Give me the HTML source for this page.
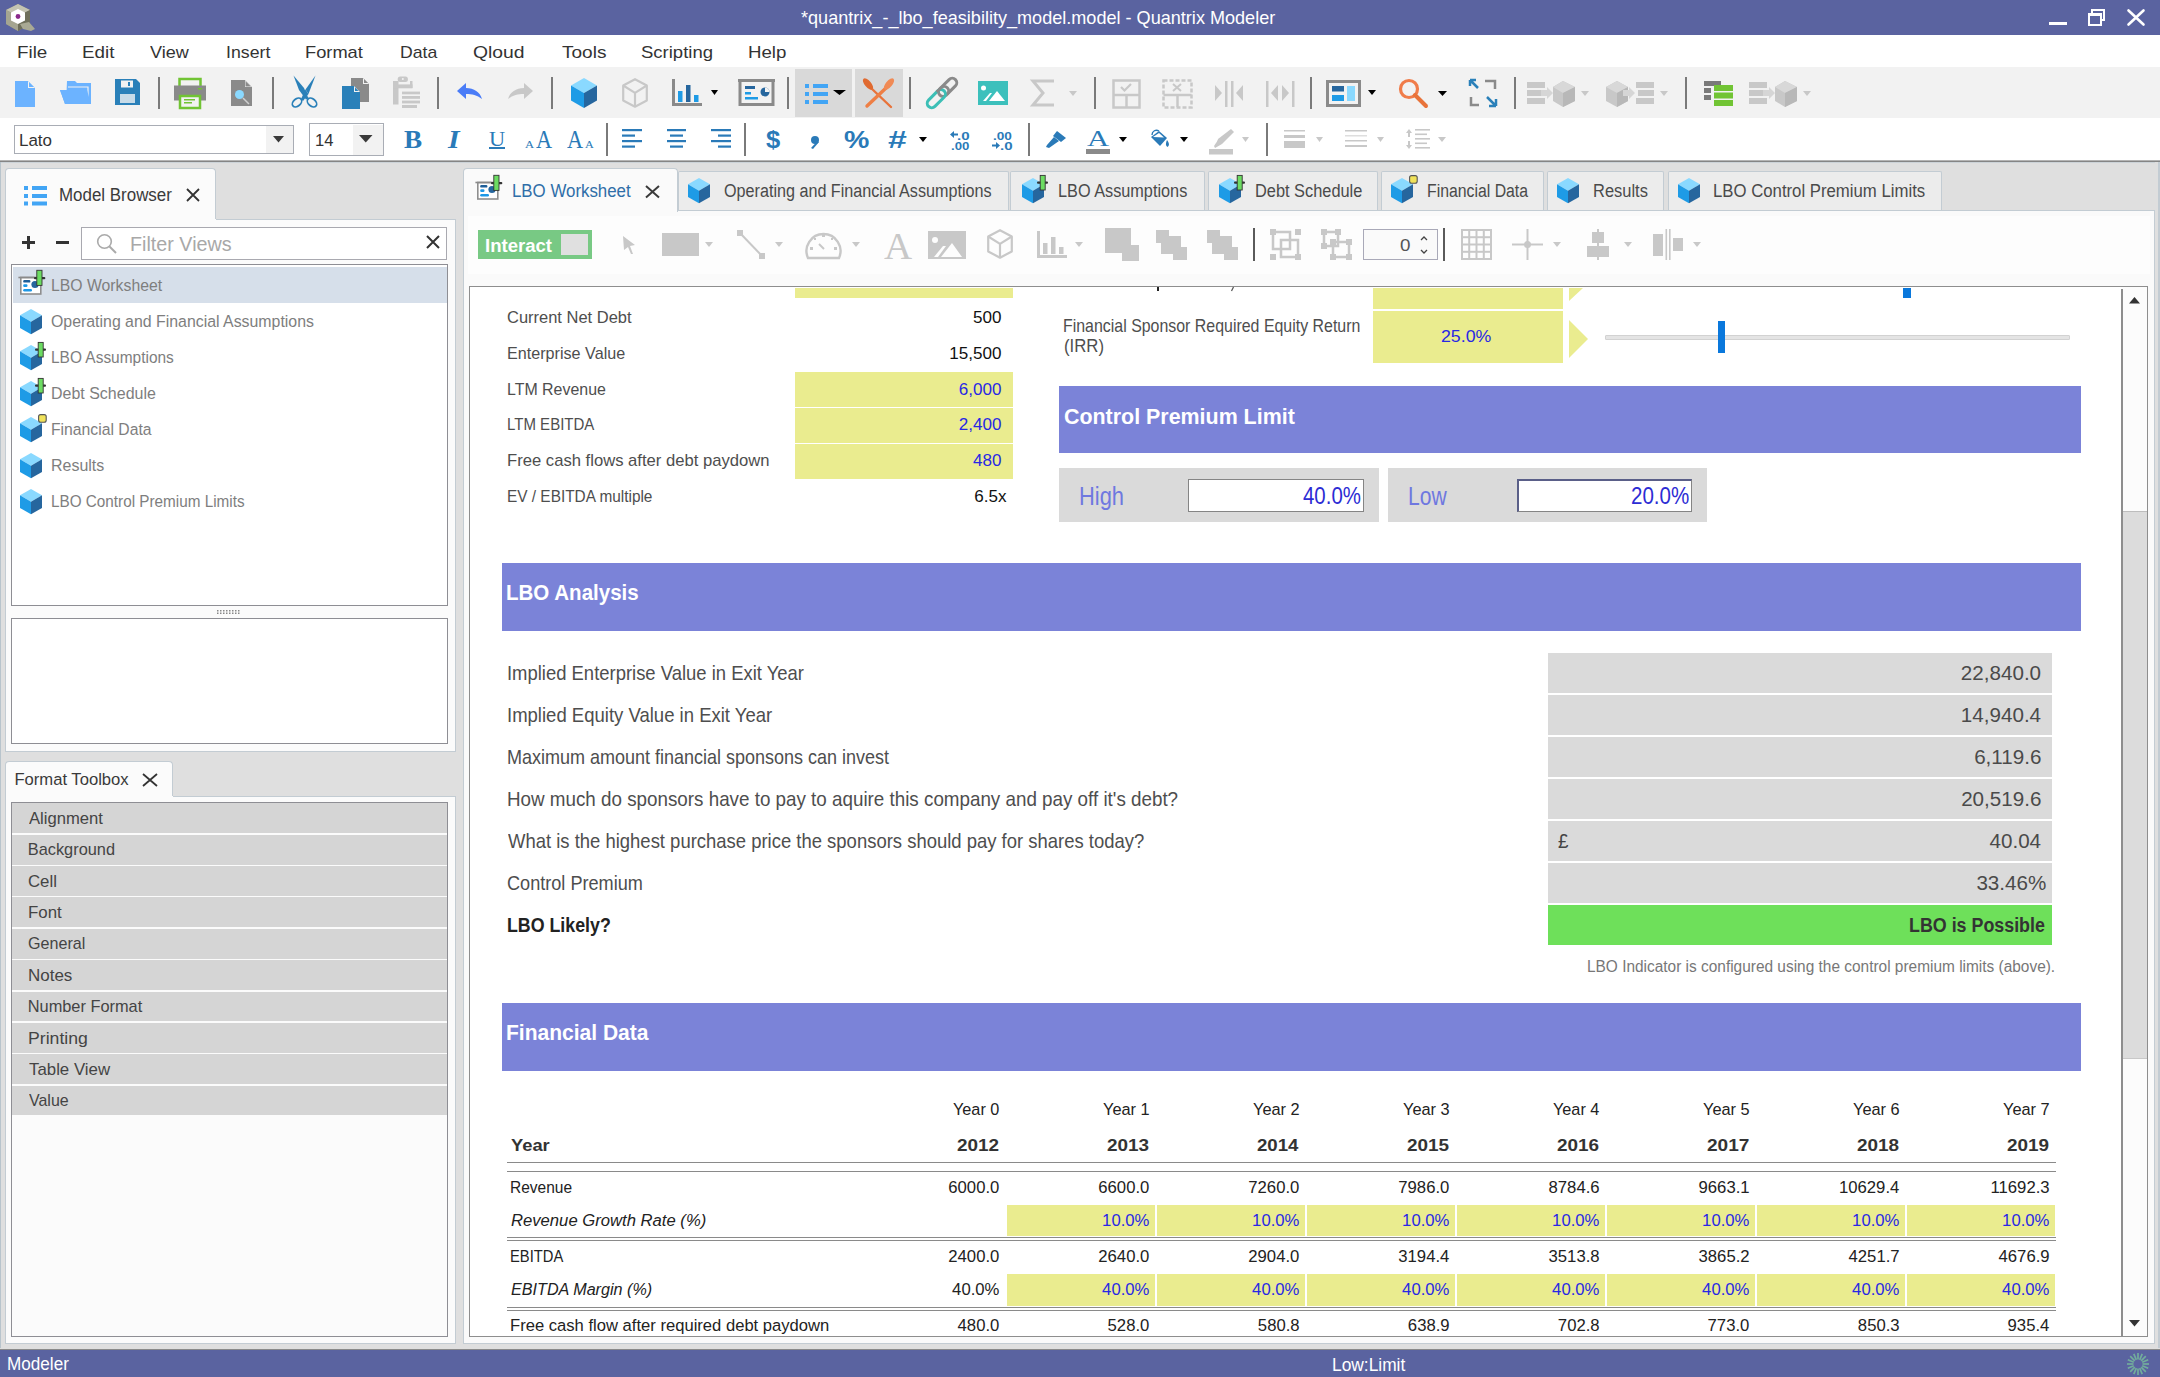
<!DOCTYPE html>
<html><head><meta charset="utf-8"><title>Quantrix Modeler</title>
<style>
html,body{margin:0;padding:0;width:2160px;height:1377px;overflow:hidden;background:#dfdfdf;font-family:"Liberation Sans",sans-serif;}
body{position:relative;}
.t{position:absolute;white-space:nowrap;transform-origin:0 0;}
svg{overflow:visible;}
</style></head><body>
<div style="position:absolute;left:0px;top:0px;width:2160px;height:35px;background:#5a63a0;"></div>
<div class="t" style="left:800.72px;top:9px;font-size:18.77px;line-height:18.77px;color:#ffffff;font-weight:normal;font-style:normal;transform:scaleX(0.9633);">*quantrix_-_lbo_feasibility_model.model - Quantrix Modeler</div>
<div style="position:absolute;left:2049px;top:22px;width:18px;height:3px;background:#ffffff;"></div>
<div style="position:absolute;left:2091px;top:9px;width:14px;height:12px;background:transparent;border:2px solid #fff;box-sizing:border-box;"></div>
<div style="position:absolute;left:2088px;top:13px;width:14px;height:13px;background:#5a63a0;border:2px solid #fff;box-sizing:border-box;border-top-width:3px;"></div>
<svg style="position:absolute;left:2127px;top:9px;" width="18" height="17" viewBox="0 0 18 17"><path d="M1.5 1.5 L16.5 15.5 M16.5 1.5 L1.5 15.5" stroke="#fff" stroke-width="2.6" stroke-linecap="round"/></svg>
<svg style="position:absolute;left:5px;top:3px;" width="32" height="30" viewBox="0 0 32 30"><polygon points="1,7 13,1 25,7 25,21 13,28 1,21" fill="#8d8d77"/><polygon points="1,7 13,1 25,7 13,13" fill="#c4c4b2"/><polygon points="1,7 13,13 13,28 1,21" fill="#a5a591"/><polygon points="13,13 25,7 25,21 13,28" fill="#6f6f5b"/><polygon points="15,21 24,19 30,26 26,28 18,26" fill="#a9a994"/><polygon points="6,9.5 13,6 20,9.5 20,17.5 13,21 6,17.5" fill="#ffffff"/><circle cx="13" cy="13.5" r="2.4" fill="#8a2a8c"/></svg>
<div style="position:absolute;left:0px;top:35px;width:2160px;height:32px;background:#ffffff;"></div>
<div class="t" style="left:17.23px;top:44px;font-size:17.35px;line-height:17.35px;color:#333333;font-weight:normal;font-style:normal;transform:scaleX(1.0850);">File</div>
<div class="t" style="left:81.53px;top:44px;font-size:17.35px;line-height:17.35px;color:#333333;font-weight:normal;font-style:normal;transform:scaleX(1.0839);">Edit</div>
<div class="t" style="left:150.00px;top:44px;font-size:17.35px;line-height:17.35px;color:#333333;font-weight:normal;font-style:normal;transform:scaleX(1.0399);">View</div>
<div class="t" style="left:225.62px;top:44px;font-size:17.35px;line-height:17.35px;color:#333333;font-weight:normal;font-style:normal;transform:scaleX(1.0215);">Insert</div>
<div class="t" style="left:305.07px;top:44px;font-size:17.35px;line-height:17.35px;color:#333333;font-weight:normal;font-style:normal;transform:scaleX(1.0531);">Format</div>
<div class="t" style="left:399.62px;top:44px;font-size:17.35px;line-height:17.35px;color:#333333;font-weight:normal;font-style:normal;transform:scaleX(1.0169);">Data</div>
<div class="t" style="left:473.49px;top:44px;font-size:17.35px;line-height:17.35px;color:#333333;font-weight:normal;font-style:normal;transform:scaleX(1.1144);">Qloud</div>
<div class="t" style="left:562.10px;top:44px;font-size:17.35px;line-height:17.35px;color:#333333;font-weight:normal;font-style:normal;transform:scaleX(1.0985);">Tools</div>
<div class="t" style="left:641.42px;top:44px;font-size:17.35px;line-height:17.35px;color:#333333;font-weight:normal;font-style:normal;transform:scaleX(1.0669);">Scripting</div>
<div class="t" style="left:747.54px;top:44px;font-size:17.35px;line-height:17.35px;color:#333333;font-weight:normal;font-style:normal;transform:scaleX(1.0766);">Help</div>
<div style="position:absolute;left:0px;top:67px;width:2160px;height:51px;background:#f2f2f2;"></div>
<svg style="position:absolute;left:15px;top:81px;" width="20" height="26" viewBox="0 0 20 26"><path d="M0 0 H13 L20 7 V26 H0 Z" fill="#6cb3ff"/><path d="M13 0 V7 H20 Z" fill="#f2f2f2"/><path d="M14 1 L19 6 H14Z" fill="#6cb3ff"/></svg>
<svg style="position:absolute;left:60px;top:81px;" width="32" height="23" viewBox="0 0 32 23"><path d="M7 0 H15 L17 2 H31 V23 H6 Z" fill="#6cb3ff"/><path d="M0 9 H27 L31 23 H5 Z" fill="#6cb3ff"/><path d="M8 6 H28 V20" fill="none" stroke="#f2f2f2" stroke-width="1.2"/><path d="M0 9 H27 L31 23 H5 Z" fill="#6cb3ff"/></svg>
<svg style="position:absolute;left:115px;top:79px;" width="25" height="26" viewBox="0 0 25 26"><path d="M0 0 H21 L25 4 V26 H0 Z" fill="#2a80b9"/><rect x="6" y="1.5" width="12" height="7" fill="#f2f2f2"/><rect x="13" y="3" width="2" height="4" fill="#2a80b9"/><rect x="5" y="15" width="15" height="9" fill="#c7dbe8"/></svg>
<div style="position:absolute;left:158px;top:77px;width:2px;height:32px;background:#7a7a7a;"></div>
<svg style="position:absolute;left:174px;top:78px;" width="32" height="31" viewBox="0 0 32 31"><rect x="5" y="0" width="22" height="31" fill="none"/><path d="M5.5 8 V1 H26.5 V8" fill="none" stroke="#71c434" stroke-width="2.5"/><rect x="0" y="7.5" width="32" height="15" fill="#8a8a8a"/><rect x="24" y="10" width="4" height="1.5" fill="#71c434"/><rect x="6" y="18" width="20" height="12" fill="#f2f2f2" stroke="#71c434" stroke-width="2.5"/><rect x="10" y="21" width="11" height="1.5" fill="#71c434"/><rect x="10" y="24" width="8" height="1.5" fill="#71c434"/></svg>
<svg style="position:absolute;left:231px;top:80px;" width="21" height="26" viewBox="0 0 21 26"><path d="M0 0 H14 L21 7 V26 H0 Z" fill="#8a8a8a"/><path d="M14 0 V7 H21 Z" fill="#f2f2f2"/><path d="M14.5 1 L20 6.5 H14.5Z" fill="#8a8a8a"/><circle cx="8.5" cy="14.5" r="4.5" fill="#8ad9ff"/><line x1="12" y1="18" x2="18" y2="24" stroke="#d0d0d0" stroke-width="1.5"/></svg>
<div style="position:absolute;left:272px;top:77px;width:2px;height:32px;background:#7a7a7a;"></div>
<svg style="position:absolute;left:280px;top:70px;" width="40" height="40" viewBox="0 0 40 40"><g fill="#2a80b9"><polygon points="13.5,5.5 24,18 28.5,28.5 26,29.5 19,20"/><polygon points="35.5,5.5 28.5,24 25.5,19.5"/><polygon points="25.5,19.5 28.5,24 23,31 21,29"/></g><g fill="none" stroke="#2a80b9" stroke-width="1.7"><ellipse cx="17" cy="32.5" rx="5.3" ry="3.6" transform="rotate(-40 17 32.5)"/><ellipse cx="32" cy="32.5" rx="5.3" ry="3.6" transform="rotate(40 32 32.5)"/></g></svg>
<svg style="position:absolute;left:342px;top:78px;" width="28" height="32" viewBox="0 0 28 32"><path d="M9 0 H21 L27 6 V24 H9 Z" fill="#8a8a8a"/><path d="M21 0 V6 H27Z" fill="#f2f2f2"/><path d="M22 1 L26 5 H22Z" fill="#8a8a8a"/><path d="M0 8 H12 L18 14 V31 H0 Z" fill="#2a80b9"/><path d="M12 8 V14 H18Z" fill="#f2f2f2"/><path d="M13 9.5 L16.5 13 H13Z" fill="#2a80b9"/></svg>
<svg style="position:absolute;left:393px;top:76px;" width="28" height="33" viewBox="0 0 28 33"><g fill="#c8c8c8"><rect x="0" y="5" width="5.5" height="23.5"/><rect x="0" y="8.4" width="19.5" height="3.9"/><rect x="17" y="5" width="2.5" height="7"/><rect x="4.7" y="0.5" width="10.2" height="5.5" rx="2.5"/><rect x="9" y="15.6" width="18" height="2.7"/><rect x="9" y="20" width="18" height="2.8"/><rect x="9" y="24.6" width="18" height="2.8"/><rect x="9" y="29" width="15" height="3"/></g><circle cx="9.8" cy="3" r="1" fill="#f2f2f2"/></svg>
<div style="position:absolute;left:437px;top:77px;width:2px;height:32px;background:#7a7a7a;"></div>
<svg style="position:absolute;left:457px;top:83px;" width="25" height="17" viewBox="0 0 25 17"><path d="M0 8 L9 0 V5 C17 5 23 9 25 16 C20 12 15 11 9 11 V16 Z" fill="#4a7cf7"/></svg>
<svg style="position:absolute;left:508px;top:83px;" width="25" height="17" viewBox="0 0 25 17"><path d="M25 8 L16 0 V5 C8 5 2 9 0 16 C5 12 10 11 16 11 V16 Z" fill="#c8c8c8"/></svg>
<div style="position:absolute;left:551px;top:77px;width:2px;height:32px;background:#7a7a7a;"></div>
<svg style="position:absolute;left:571px;top:78px;" width="26" height="29.9" viewBox="0 0 26 29.9"><polygon points="13.0,0 26,7.475 13.0,14.95 0,7.475" fill="#8ad9ff"/><polygon points="0,7.475 13.0,14.95 13.0,29.9 0,22.424999999999997" fill="#1e9be6"/><polygon points="13.0,14.95 26,7.475 26,22.424999999999997 13.0,29.9" fill="#26669e"/></svg>
<svg style="position:absolute;left:622px;top:78px;" width="26" height="29.9" viewBox="0 0 26 29.9"><g fill="none" stroke="#c8c8c8" stroke-width="2.2" stroke-linejoin="round"><polygon points="13.0,1.2 24.8,7.475 24.8,22.424999999999997 13.0,28.7 1.2,22.424999999999997 1.2,7.475"/><polyline points="1.2,7.475 13.0,14.95 24.8,7.475"/><line x1="13.0" y1="14.95" x2="13.0" y2="28.7"/></g></svg>
<svg style="position:absolute;left:672px;top:79px;" width="30" height="27" viewBox="0 0 30 27"><path d="M1.5 0 V25.5 H30" fill="none" stroke="#8a8a8a" stroke-width="3"/><rect x="6" y="12" width="4.5" height="11" fill="#1e9be6"/><rect x="14" y="6" width="4.5" height="17" fill="#26669e"/><rect x="22" y="16" width="4.5" height="7" fill="#1e9be6"/></svg>
<svg style="position:absolute;left:711px;top:90px;" width="7" height="5" viewBox="0 0 7 5"><polygon points="0,0 7,0 3.5,5" fill="#000"/></svg>
<svg style="position:absolute;left:738px;top:79px;" width="37" height="27" viewBox="0 0 37 27"><rect x="2" y="1.5" width="33" height="24" fill="none" stroke="#8a8a8a" stroke-width="3"/><rect x="0" y="0" width="37" height="3" fill="#8a8a8a"/><rect x="7" y="7" width="10" height="3" fill="#26669e"/><rect x="7" y="13" width="6" height="2.5" fill="#1e9be6"/><rect x="7" y="18" width="13" height="2.5" fill="#1e9be6"/><circle cx="27" cy="13" r="4.5" fill="#26669e"/><path d="M27 13 V8.5 A4.5 4.5 0 0 1 31.5 13Z" fill="#f2f2f2"/></svg>
<div style="position:absolute;left:787px;top:77px;width:2px;height:32px;background:#7a7a7a;"></div>
<div style="position:absolute;left:795px;top:69px;width:57px;height:48px;background:#d9d9d9;"></div>
<div style="position:absolute;left:855px;top:69px;width:48px;height:48px;background:#d9d9d9;"></div>
<svg style="position:absolute;left:805px;top:84px;" width="23" height="20" viewBox="0 0 23 20"><rect x="0" y="0" width="4" height="4" fill="#42a5f5"/><rect x="8" y="0" width="15" height="4" fill="#42a5f5"/><rect x="0" y="8" width="4" height="4" fill="#42a5f5"/><rect x="8" y="8" width="15" height="4" fill="#42a5f5"/><rect x="0" y="16" width="4" height="4" fill="#42a5f5"/><rect x="8" y="16" width="15" height="4" fill="#42a5f5"/></svg>
<svg style="position:absolute;left:833px;top:90px;" width="13" height="5" viewBox="0 0 13 5"><polygon points="0,0 13,0 6.5,5" fill="#000"/></svg>
<svg style="position:absolute;left:863px;top:78px;" width="31" height="30" viewBox="0 0 31 30"><line x1="8" y1="10" x2="28" y2="29" stroke="#e8733a" stroke-width="2.4" stroke-linecap="round"/><line x1="23" y1="10" x2="4" y2="28" stroke="#ee7f45" stroke-width="3.4" stroke-linecap="round"/><ellipse cx="5" cy="6" rx="7" ry="3.2" transform="rotate(50 5 6)" fill="#e06a30"/><ellipse cx="26" cy="6" rx="7" ry="3.2" transform="rotate(-50 26 6)" fill="#f08a55"/></svg>
<div style="position:absolute;left:909px;top:77px;width:2px;height:32px;background:#7a7a7a;"></div>
<svg style="position:absolute;left:927px;top:78px;" width="30" height="30" viewBox="0 0 30 30"><g transform="rotate(-45 15 15)" fill="none" stroke-width="3"><rect x="12" y="10.5" width="22" height="9" rx="4.5" stroke="#8a8a8a"/><rect x="-4" y="10.5" width="22" height="9" rx="4.5" stroke="#3cbfb6"/><path d="M12 10.5 H18 A4.5 4.5 0 0 1 18 19.5" stroke="#8a8a8a"/></g></svg>
<svg style="position:absolute;left:978px;top:81px;" width="30" height="24" viewBox="0 0 30 24"><rect width="30" height="24" fill="#3cc0bc"/><circle cx="5.5" cy="7" r="2.5" fill="#fff"/><path d="M5 20 L12 12 L14 12 L8 20Z" fill="#fff"/><path d="M11 20 L19 10 L27 20Z" fill="#fff"/></svg>
<svg style="position:absolute;left:1032px;top:81px;" width="23" height="24" viewBox="0 0 23 24"><path d="M22 0 H1 L11 12 L1 24 H22" fill="none" stroke="#c8c8c8" stroke-width="3"/></svg>
<svg style="position:absolute;left:1069px;top:91px;" width="8" height="5" viewBox="0 0 8 5"><polygon points="0,0 8,0 4.0,5" fill="#c8c8c8"/></svg>
<div style="position:absolute;left:1094px;top:77px;width:2px;height:32px;background:#7a7a7a;"></div>
<svg style="position:absolute;left:1112px;top:79px;" width="29" height="30" viewBox="0 0 29 30"><rect x="1.5" y="1.5" width="26" height="27" fill="none" stroke="#c8c8c8" stroke-width="2.5"/><line x1="1.5" y1="16" x2="27.5" y2="16" stroke="#c8c8c8" stroke-width="2.5"/><line x1="14.5" y1="16" x2="14.5" y2="28" stroke="#c8c8c8" stroke-width="2.5"/><path d="M9 8 L12.5 11.5 L19 5" fill="none" stroke="#c8c8c8" stroke-width="2.2"/></svg>
<svg style="position:absolute;left:1162px;top:79px;" width="31" height="30" viewBox="0 0 31 30"><rect x="1.5" y="1.5" width="28" height="27" fill="none" stroke="#c8c8c8" stroke-width="2.5" stroke-dasharray="4 2"/><line x1="1.5" y1="16" x2="29.5" y2="16" stroke="#c8c8c8" stroke-width="2.5"/><line x1="15.5" y1="16" x2="15.5" y2="28" stroke="#c8c8c8" stroke-width="2.5"/><path d="M11 5 L19 12 M19 5 L11 12" fill="none" stroke="#c8c8c8" stroke-width="2"/></svg>
<svg style="position:absolute;left:1215px;top:81px;" width="29" height="26" viewBox="0 0 29 26"><path d="M0 4 L7 12 L0 20Z" fill="#c8c8c8"/><rect x="10" y="0" width="2.5" height="26" fill="#c8c8c8"/><rect x="16" y="0" width="2.5" height="26" fill="#c8c8c8"/><path d="M28 4 L21 12 L28 20Z" fill="#c8c8c8"/></svg>
<svg style="position:absolute;left:1266px;top:81px;" width="29" height="26" viewBox="0 0 29 26"><rect x="0" y="0" width="2.5" height="26" fill="#c8c8c8"/><path d="M12 4 L5 12 L12 20Z" fill="#c8c8c8"/><path d="M16 4 L23 12 L16 20Z" fill="#c8c8c8"/><rect x="26" y="0" width="2.5" height="26" fill="#c8c8c8"/></svg>
<div style="position:absolute;left:1310px;top:77px;width:2px;height:32px;background:#7a7a7a;"></div>
<svg style="position:absolute;left:1326px;top:80px;" width="35" height="27" viewBox="0 0 35 27"><rect x="1.5" y="1.5" width="32" height="24" fill="none" stroke="#8a8a8a" stroke-width="3"/><rect x="6" y="6" width="12" height="5.5" fill="#26669e"/><rect x="6" y="15" width="12" height="6" fill="#1e9be6"/><rect x="21" y="6" width="8" height="15" fill="#8ad9ff"/></svg>
<svg style="position:absolute;left:1368px;top:90px;" width="8" height="5" viewBox="0 0 8 5"><polygon points="0,0 8,0 4.0,5" fill="#000"/></svg>
<svg style="position:absolute;left:1398px;top:78px;" width="31" height="31" viewBox="0 0 31 31"><circle cx="11" cy="11" r="8.5" fill="none" stroke="#f07c4a" stroke-width="3.2"/><line x1="17" y1="17" x2="28" y2="28" stroke="#e8733a" stroke-width="4" stroke-linecap="round"/></svg>
<svg style="position:absolute;left:1438px;top:91px;" width="9" height="5" viewBox="0 0 9 5"><polygon points="0,0 9,0 4.5,5" fill="#000"/></svg>
<svg style="position:absolute;left:1469px;top:79px;" width="28" height="28" viewBox="0 0 28 28"><path d="M16 2 H26 V10 M2 18 V26 H10" fill="none" stroke="#8a8a8a" stroke-width="2.5"/><path d="M1 1 L9 9 M1 1 H7 M1 1 V7" fill="none" stroke="#2a80b9" stroke-width="2.5"/><path d="M27 27 L18 18 M27 27 H20 M27 27 V20" fill="none" stroke="#2a80b9" stroke-width="2.5"/></svg>
<div style="position:absolute;left:1514px;top:77px;width:2px;height:32px;background:#7a7a7a;"></div>
<svg style="position:absolute;left:1527px;top:81px;" width="48" height="26" viewBox="0 0 48 26"><rect x="0" y="1" width="18" height="6" fill="#c8c8c8"/><rect x="0" y="9" width="14" height="6" fill="#c8c8c8"/><rect x="0" y="17" width="18" height="6" fill="#c8c8c8"/><path d="M14 9 H20 V6 L26 12 L20 18 V15 H14Z" fill="#d6d6d6"/><polygon points="36,0 48,6 48,20 36,26 26,20 26,6" fill="#c8c8c8"/><polygon points="26,6 36,12 48,6 36,0" fill="#d8d8d8"/><polygon points="36,12 48,6 48,20 36,26" fill="#b8b8b8"/></svg>
<svg style="position:absolute;left:1581px;top:91px;" width="8" height="5" viewBox="0 0 8 5"><polygon points="0,0 8,0 4.0,5" fill="#c8c8c8"/></svg>
<svg style="position:absolute;left:1606px;top:81px;" width="48" height="26" viewBox="0 0 48 26"><polygon points="11,0 22,6 22,20 11,26 0,20 0,6" fill="#c8c8c8"/><polygon points="0,6 11,12 22,6 11,0" fill="#d8d8d8"/><polygon points="11,12 22,6 22,20 11,26" fill="#b8b8b8"/><path d="M17 9 H23 V6 L29 12 L23 18 V15 H17Z" fill="#d6d6d6"/><rect x="30" y="1" width="18" height="6" fill="#c8c8c8"/><rect x="32" y="9" width="16" height="6" fill="#c8c8c8"/><rect x="30" y="17" width="18" height="6" fill="#c8c8c8"/></svg>
<svg style="position:absolute;left:1660px;top:91px;" width="8" height="5" viewBox="0 0 8 5"><polygon points="0,0 8,0 4.0,5" fill="#c8c8c8"/></svg>
<div style="position:absolute;left:1685px;top:77px;width:2px;height:32px;background:#7a7a7a;"></div>
<svg style="position:absolute;left:1704px;top:81px;" width="29" height="25" viewBox="0 0 29 25"><rect x="0" y="0" width="17" height="5" fill="#7a7a7a"/><rect x="0" y="7" width="7" height="5" fill="#7a7a7a"/><rect x="0" y="14" width="7" height="5" fill="#7a7a7a"/><rect x="10" y="4" width="19" height="6" fill="#71c434"/><rect x="10" y="11.5" width="19" height="6" fill="#71c434"/><rect x="10" y="19" width="19" height="6" fill="#71c434"/></svg>
<svg style="position:absolute;left:1749px;top:81px;" width="48" height="26" viewBox="0 0 48 26"><rect x="0" y="1" width="18" height="6" fill="#c8c8c8"/><rect x="0" y="9" width="14" height="6" fill="#c8c8c8"/><rect x="0" y="17" width="18" height="6" fill="#c8c8c8"/><path d="M14 9 H20 V6 L26 12 L20 18 V15 H14Z" fill="#d6d6d6"/><polygon points="36,0 48,6 48,20 36,26 26,20 26,6" fill="#c8c8c8"/><polygon points="26,6 36,12 48,6 36,0" fill="#d8d8d8"/><polygon points="36,12 48,6 48,20 36,26" fill="#b8b8b8"/></svg>
<svg style="position:absolute;left:1803px;top:91px;" width="8" height="5" viewBox="0 0 8 5"><polygon points="0,0 8,0 4.0,5" fill="#c8c8c8"/></svg>
<div style="position:absolute;left:0px;top:118px;width:2160px;height:42px;background:#ffffff;"></div>
<div style="position:absolute;left:14px;top:125px;width:280px;height:29px;background:#ffffff;border:1.5px solid #a9adb5;box-sizing:border-box;"></div>
<div style="position:absolute;left:266px;top:126px;width:27px;height:27px;background:#f2f2f2;"></div>
<svg style="position:absolute;left:273px;top:136px;" width="11" height="7" viewBox="0 0 11 7"><polygon points="0,0 11,0 5.5,6.5" fill="#3a3a3a"/></svg>
<div class="t" style="left:18.67px;top:132px;font-size:17.07px;line-height:17.07px;color:#333;font-weight:normal;font-style:normal;transform:scaleX(0.9937);">Lato</div>
<div style="position:absolute;left:309px;top:123px;width:75px;height:33px;background:#ffffff;border:1.5px solid #a9adb5;box-sizing:border-box;"></div>
<div style="position:absolute;left:352.5px;top:124.5px;width:30.0px;height:30.0px;background:#f2f2f2;"></div>
<svg style="position:absolute;left:358.5px;top:134.7px;" width="14" height="8" viewBox="0 0 14 8"><polygon points="0,0 13.5,0 6.75,7.6" fill="#3a3a3a"/></svg>
<div class="t" style="left:314.96px;top:132px;font-size:17.07px;line-height:17.07px;color:#333;font-weight:normal;font-style:normal;transform:scaleX(0.9717);">14</div>
<div class="t" style="left:404.38px;top:127px;font-size:25.03px;line-height:25.03px;color:#2a7ab8;font-weight:bold;font-style:normal;font-family:'Liberation Serif', serif;transform:scaleX(1.0867);">B</div>
<div class="t" style="left:447.86px;top:127px;font-size:25.03px;line-height:25.03px;color:#2a7ab8;font-weight:bold;font-style:italic;font-family:'Liberation Serif', serif;transform:scaleX(1.1871);">I</div>
<div class="t" style="left:488.65px;top:129px;font-size:21.33px;line-height:21.33px;color:#2a7ab8;font-weight:normal;font-style:normal;font-family:'Liberation Serif', serif;transform:scaleX(1.0502);">U</div>
<div style="position:absolute;left:489px;top:147px;width:16px;height:2px;background:#2a7ab8;"></div>
<div class="t" style="left:536.00px;top:127px;font-size:25.03px;line-height:25.03px;color:#2a7ab8;font-weight:normal;font-style:normal;font-family:'Liberation Serif', serif;transform:scaleX(0.8894);">A</div>
<div class="t" style="left:525.00px;top:139px;font-size:10.67px;line-height:10.67px;color:#2a7ab8;font-weight:normal;font-style:normal;font-family:'Liberation Serif', serif;transform:scaleX(1.1735);">A</div>
<div class="t" style="left:567.00px;top:127px;font-size:25.03px;line-height:25.03px;color:#2a7ab8;font-weight:normal;font-style:normal;font-family:'Liberation Serif', serif;transform:scaleX(0.8894);">A</div>
<div class="t" style="left:585.00px;top:139px;font-size:10.67px;line-height:10.67px;color:#2a7ab8;font-weight:normal;font-style:normal;font-family:'Liberation Serif', serif;transform:scaleX(1.1344);">A</div>
<div style="position:absolute;left:606px;top:123px;width:2px;height:33px;background:#7a7a7a;"></div>
<svg style="position:absolute;left:622px;top:129px;" width="21" height="20" viewBox="0 0 21 20"><g fill="#2a7ab8"><rect y="0" width="20" height="2.2"/><rect y="5.5" width="13" height="2.2"/><rect y="11" width="20" height="2.2"/><rect y="16.5" width="13" height="2.2"/></g></svg>
<svg style="position:absolute;left:667px;top:129px;" width="19" height="20" viewBox="0 0 19 20"><g fill="#2a7ab8"><rect y="0" width="19" height="2.2"/><rect x="3" y="5.5" width="13" height="2.2"/><rect y="11" width="19" height="2.2"/><rect x="3" y="16.5" width="13" height="2.2"/></g></svg>
<svg style="position:absolute;left:711px;top:129px;" width="20" height="20" viewBox="0 0 20 20"><g fill="#2a7ab8"><rect y="0" width="20" height="2.2"/><rect x="7" y="5.5" width="13" height="2.2"/><rect y="11" width="20" height="2.2"/><rect x="7" y="16.5" width="13" height="2.2"/></g></svg>
<div style="position:absolute;left:744px;top:123px;width:2px;height:33px;background:#7a7a7a;"></div>
<div class="t" style="left:766.00px;top:128px;font-size:24.18px;line-height:24.18px;color:#2a7ab8;font-weight:bold;font-style:normal;transform:scaleX(1.0587);">$</div>
<svg style="position:absolute;left:810px;top:136px;" width="9" height="13" viewBox="0 0 9 13"><circle cx="5" cy="4" r="4" fill="#2a7ab8"/><path d="M6.5 6 L9 6 L3 13 L1 12 Z" fill="#2a7ab8"/></svg>
<div class="t" style="left:843.55px;top:129px;font-size:23.32px;line-height:23.32px;color:#2a7ab8;font-weight:bold;font-style:normal;transform:scaleX(1.2225);">%</div>
<div class="t" style="left:888.47px;top:128px;font-size:24.18px;line-height:24.18px;color:#2a7ab8;font-weight:bold;font-style:normal;transform:scaleX(1.4013);">#</div>
<svg style="position:absolute;left:919px;top:137px;" width="8" height="5" viewBox="0 0 8 5"><polygon points="0,0 8,0 4.0,5" fill="#000"/></svg>
<div class="t" style="left:957.06px;top:131px;font-size:11.38px;line-height:11.38px;color:#2a7ab8;font-weight:bold;font-style:normal;transform:scaleX(1.3224);">.0</div>
<div class="t" style="left:951.17px;top:141px;font-size:11.38px;line-height:11.38px;color:#2a7ab8;font-weight:bold;font-style:normal;transform:scaleX(1.1606);">.00</div>
<svg style="position:absolute;left:950px;top:131px;" width="8" height="7" viewBox="0 0 8 7"><path d="M0 3.5 L4 0 V2.5 H8 V4.5 H4 V7Z" fill="#2a7ab8"/></svg>
<div class="t" style="left:993.15px;top:131px;font-size:11.38px;line-height:11.38px;color:#2a7ab8;font-weight:bold;font-style:normal;transform:scaleX(1.1948);">.00</div>
<div class="t" style="left:999.56px;top:141px;font-size:11.38px;line-height:11.38px;color:#2a7ab8;font-weight:bold;font-style:normal;transform:scaleX(1.3224);">.0</div>
<svg style="position:absolute;left:992px;top:142px;" width="8" height="7" viewBox="0 0 8 7"><path d="M8 3.5 L4 0 V2.5 H0 V4.5 H4 V7Z" fill="#2a7ab8"/></svg>
<div style="position:absolute;left:1028px;top:123px;width:2px;height:33px;background:#7a7a7a;"></div>
<svg style="position:absolute;left:1045px;top:131px;" width="21" height="18" viewBox="0 0 21 18"><path d="M12 0 L21 7 L16 11 L8 5Z" fill="#2a7ab8"/><path d="M9 6 L14 10 L4 17 L1 16 L2 14Z" fill="#2a7ab8"/></svg>
<div class="t" style="left:1087.00px;top:128px;font-size:22.76px;line-height:22.76px;color:#2a7ab8;font-weight:normal;font-style:normal;font-family:'Liberation Serif', serif;transform:scaleX(1.3448);">A</div>
<div style="position:absolute;left:1086px;top:149px;width:24px;height:5px;background:#8a8a8a"></div>
<svg style="position:absolute;left:1119px;top:137px;" width="8" height="5" viewBox="0 0 8 5"><polygon points="0,0 8,0 4.0,5" fill="#000"/></svg>
<svg style="position:absolute;left:1150px;top:129px;" width="20" height="19" viewBox="0 0 20 19"><path d="M1 8 L9 2 L17 9 L10 17 Z" fill="#2a7ab8"/><path d="M3 8 L9 4 L14 8.5 Z" fill="#fff"/><path d="M2 6 C2 2 6 0 9 2" fill="none" stroke="#2a7ab8" stroke-width="1.4"/><path d="M17 11 C19 14 20 16 17.5 18 C15 16 16 14 17 11Z" fill="#2a7ab8"/></svg>
<svg style="position:absolute;left:1180px;top:137px;" width="8" height="5" viewBox="0 0 8 5"><polygon points="0,0 8,0 4.0,5" fill="#000"/></svg>
<svg style="position:absolute;left:1209px;top:129px;" width="25" height="26" viewBox="0 0 25 26"><path d="M22 0 L25 3 L13 15 L8 14 L9 10Z" fill="#c8c8c8"/><path d="M9 11 L13 15 L6 19 L5 17Z" fill="#c8c8c8"/><rect x="0" y="20" width="24" height="5.5" fill="#c8c8c8"/></svg>
<svg style="position:absolute;left:1242px;top:137px;" width="7" height="5" viewBox="0 0 7 5"><polygon points="0,0 7,0 3.5,5" fill="#c8c8c8"/></svg>
<div style="position:absolute;left:1266px;top:123px;width:2px;height:33px;background:#7a7a7a;"></div>
<svg style="position:absolute;left:1284px;top:130px;" width="21" height="18" viewBox="0 0 21 18"><g fill="#c8c8c8"><rect y="0" width="21" height="1.5"/><rect y="5" width="21" height="3"/><rect y="11" width="21" height="7"/></g></svg>
<svg style="position:absolute;left:1316px;top:137px;" width="7" height="5" viewBox="0 0 7 5"><polygon points="0,0 7,0 3.5,5" fill="#c8c8c8"/></svg>
<svg style="position:absolute;left:1345px;top:130px;" width="22" height="19" viewBox="0 0 22 19"><g fill="#c8c8c8"><rect y="0" width="22" height="1.5"/><rect y="5" width="22" height="1.5" opacity="0.6"/><rect y="10" width="22" height="1.5"/><rect y="15" width="22" height="2"/></g></svg>
<svg style="position:absolute;left:1377px;top:137px;" width="7" height="5" viewBox="0 0 7 5"><polygon points="0,0 7,0 3.5,5" fill="#c8c8c8"/></svg>
<svg style="position:absolute;left:1406px;top:129px;" width="24" height="20" viewBox="0 0 24 20"><g fill="#c8c8c8"><path d="M3 0 L6 4 H4 V8 H2 V4 H0Z"/><path d="M3 20 L6 16 H4 V12 H2 V16 H0Z"/><rect x="9" y="0" width="15" height="1.6"/><rect x="9" y="4.5" width="12" height="1.6"/><rect x="9" y="9" width="15" height="1.6"/><rect x="9" y="13.5" width="12" height="1.6"/><rect x="9" y="18" width="15" height="1.6"/></g></svg>
<svg style="position:absolute;left:1438px;top:137px;" width="8" height="5" viewBox="0 0 8 5"><polygon points="0,0 8,0 4.0,5" fill="#c8c8c8"/></svg>
<div style="position:absolute;left:0px;top:160px;width:2160px;height:1px;background:#b4b4b4;"></div>
<div style="position:absolute;left:0px;top:161px;width:2160px;height:1px;background:#858585;"></div>
<div style="position:absolute;left:0px;top:162px;width:2160px;height:1px;background:#ccd3d8;"></div>
<div style="position:absolute;left:0px;top:162px;width:1px;height:1186px;background:#b8c4cc;"></div>
<div style="position:absolute;left:5px;top:168px;width:211px;height:52px;background:#fbfbfb;border:1px solid #c3ccd3;border-bottom:none;border-radius:4px 4px 0 0;box-sizing:border-box;"></div>
<div style="position:absolute;left:5px;top:219px;width:451px;height:533px;background:#fbfbfb;border:1px solid #c3ccd3;border-top:none;box-sizing:border-box;"></div>
<div style="position:absolute;left:216px;top:219px;width:240px;height:1px;background:#c3ccd3;"></div>
<svg style="position:absolute;left:24px;top:186px;" width="23" height="20" viewBox="0 0 23 20"><g fill="#42a5f5"><rect x="0" y="0" width="4" height="4"/><rect x="8" y="0" width="15" height="4"/><rect x="0" y="8" width="4" height="4"/><rect x="8" y="8" width="15" height="4"/><rect x="0" y="15.5" width="4" height="4"/><rect x="8" y="15.5" width="15" height="4"/></g></svg>
<div class="t" style="left:59.18px;top:186px;font-size:18.49px;line-height:18.49px;color:#3a3a3a;font-weight:normal;font-style:normal;transform:scaleX(0.9156);">Model Browser</div>
<svg style="position:absolute;left:186px;top:188px;" width="14" height="14" viewBox="0 0 14 14"><path d="M1 1 L13 13 M13 1 L1 13" stroke="#333" stroke-width="1.8"/></svg>
<div style="position:absolute;left:22px;top:241px;width:13px;height:2.5px;background:#333;"></div>
<div style="position:absolute;left:27.3px;top:236px;width:2.3999999999999986px;height:13px;background:#333;"></div>
<div style="position:absolute;left:56px;top:241px;width:13px;height:2.5px;background:#333;"></div>
<div style="position:absolute;left:81px;top:227px;width:366px;height:33px;background:#ffffff;border:1px solid #a9a9b0;box-sizing:border-box;"></div>
<svg style="position:absolute;left:96px;top:233px;" width="22" height="22" viewBox="0 0 22 22"><circle cx="8.5" cy="8.5" r="6.8" fill="none" stroke="#aaa" stroke-width="1.6"/><line x1="13.5" y1="13.5" x2="20" y2="20" stroke="#aaa" stroke-width="2"/></svg>
<div class="t" style="left:129.96px;top:235px;font-size:19.91px;line-height:19.91px;color:#a8a8a8;font-weight:normal;font-style:normal;transform:scaleX(0.9916);">Filter Views</div>
<svg style="position:absolute;left:426px;top:235px;" width="14" height="14" viewBox="0 0 14 14"><path d="M1 1 L13 13 M13 1 L1 13" stroke="#333" stroke-width="2"/></svg>
<div style="position:absolute;left:11px;top:264px;width:437px;height:342px;background:#ffffff;border:1px solid #8e8e94;box-sizing:border-box;"></div>
<div style="position:absolute;left:13px;top:266.5px;width:434px;height:36.0px;background:#d6dfea;"></div>
<div class="t" style="left:50.77px;top:277px;font-size:17.07px;line-height:17.07px;color:#7e7e7e;font-weight:normal;font-style:normal;transform:scaleX(0.9252);">LBO Worksheet</div>
<div class="t" style="left:51.26px;top:313px;font-size:17.07px;line-height:17.07px;color:#7e7e7e;font-weight:normal;font-style:normal;transform:scaleX(0.9303);">Operating and Financial Assumptions</div>
<div class="t" style="left:50.79px;top:349px;font-size:17.07px;line-height:17.07px;color:#7e7e7e;font-weight:normal;font-style:normal;transform:scaleX(0.9054);">LBO Assumptions</div>
<div class="t" style="left:50.75px;top:385px;font-size:17.07px;line-height:17.07px;color:#7e7e7e;font-weight:normal;font-style:normal;transform:scaleX(0.9367);">Debt Schedule</div>
<div class="t" style="left:50.77px;top:421px;font-size:17.07px;line-height:17.07px;color:#7e7e7e;font-weight:normal;font-style:normal;transform:scaleX(0.9223);">Financial Data</div>
<div class="t" style="left:50.75px;top:457px;font-size:17.07px;line-height:17.07px;color:#7e7e7e;font-weight:normal;font-style:normal;transform:scaleX(0.9355);">Results</div>
<div class="t" style="left:50.81px;top:493px;font-size:17.07px;line-height:17.07px;color:#7e7e7e;font-weight:normal;font-style:normal;transform:scaleX(0.8955);">LBO Control Premium Limits</div>
<svg style="position:absolute;left:18px;top:270px;" width="28" height="26" viewBox="0 0 28 26"><rect x="2.8" y="7.5" width="20" height="16.5" fill="#fff" stroke="#8e8e8e" stroke-width="1.6"/><rect x="0.4" y="6.7" width="16" height="1.6" fill="#8a8a8a"/><rect x="5.2" y="10" width="7.2" height="2.6" rx="1.2" fill="#1f5f99"/><rect x="5.2" y="14.3" width="4.3" height="2.7" rx="1.2" fill="#1e98e6"/><rect x="5.2" y="19" width="8.8" height="2.5" rx="1.2" fill="#1e98e6"/><circle cx="17" cy="14.5" r="3.6" fill="#26669e"/><rect x="16" y="7" width="11.3" height="2.3" rx="1" fill="#333"/><rect x="18.8" y="0.3" width="5.2" height="15.1" fill="#6cdc62" stroke="#333" stroke-width="0.9"/></svg>
<svg style="position:absolute;left:20px;top:309px;" width="22" height="25.299999999999997" viewBox="0 0 22 25.299999999999997"><polygon points="11.0,0 22,6.324999999999999 11.0,12.649999999999999 0,6.324999999999999" fill="#8ad9ff"/><polygon points="0,6.324999999999999 11.0,12.649999999999999 11.0,25.299999999999997 0,18.974999999999998" fill="#1e9be6"/><polygon points="11.0,12.649999999999999 22,6.324999999999999 22,18.974999999999998 11.0,25.299999999999997" fill="#26669e"/></svg>
<svg style="position:absolute;left:20px;top:345px;" width="22" height="25.299999999999997" viewBox="0 0 22 25.299999999999997"><polygon points="11.0,0 22,6.324999999999999 11.0,12.649999999999999 0,6.324999999999999" fill="#8ad9ff"/><polygon points="0,6.324999999999999 11.0,12.649999999999999 11.0,25.299999999999997 0,18.974999999999998" fill="#1e9be6"/><polygon points="11.0,12.649999999999999 22,6.324999999999999 22,18.974999999999998 11.0,25.299999999999997" fill="#26669e"/></svg>
<svg style="position:absolute;left:35px;top:342px;" width="12" height="16" viewBox="0 0 12 16"><rect x="0" y="6.6" width="11" height="2.2" rx="1" fill="#333"/><rect x="3.2" y="0.4" width="5" height="14.6" fill="#6cdc62" stroke="#333" stroke-width="0.9"/></svg>
<svg style="position:absolute;left:20px;top:381px;" width="22" height="25.299999999999997" viewBox="0 0 22 25.299999999999997"><polygon points="11.0,0 22,6.324999999999999 11.0,12.649999999999999 0,6.324999999999999" fill="#8ad9ff"/><polygon points="0,6.324999999999999 11.0,12.649999999999999 11.0,25.299999999999997 0,18.974999999999998" fill="#1e9be6"/><polygon points="11.0,12.649999999999999 22,6.324999999999999 22,18.974999999999998 11.0,25.299999999999997" fill="#26669e"/></svg>
<svg style="position:absolute;left:35px;top:378px;" width="12" height="16" viewBox="0 0 12 16"><rect x="0" y="6.6" width="11" height="2.2" rx="1" fill="#333"/><rect x="3.2" y="0.4" width="5" height="14.6" fill="#6cdc62" stroke="#333" stroke-width="0.9"/></svg>
<svg style="position:absolute;left:20px;top:417px;" width="22" height="25.299999999999997" viewBox="0 0 22 25.299999999999997"><polygon points="11.0,0 22,6.324999999999999 11.0,12.649999999999999 0,6.324999999999999" fill="#8ad9ff"/><polygon points="0,6.324999999999999 11.0,12.649999999999999 11.0,25.299999999999997 0,18.974999999999998" fill="#1e9be6"/><polygon points="11.0,12.649999999999999 22,6.324999999999999 22,18.974999999999998 11.0,25.299999999999997" fill="#26669e"/></svg>
<svg style="position:absolute;left:38px;top:414px;" width="9" height="9" viewBox="0 0 9 9"><rect x="0.6" y="0.6" width="7.6" height="7.6" rx="2" fill="#f0e25a" stroke="#555" stroke-width="1.1"/></svg>
<svg style="position:absolute;left:20px;top:453px;" width="22" height="25.299999999999997" viewBox="0 0 22 25.299999999999997"><polygon points="11.0,0 22,6.324999999999999 11.0,12.649999999999999 0,6.324999999999999" fill="#8ad9ff"/><polygon points="0,6.324999999999999 11.0,12.649999999999999 11.0,25.299999999999997 0,18.974999999999998" fill="#1e9be6"/><polygon points="11.0,12.649999999999999 22,6.324999999999999 22,18.974999999999998 11.0,25.299999999999997" fill="#26669e"/></svg>
<svg style="position:absolute;left:20px;top:489px;" width="22" height="25.299999999999997" viewBox="0 0 22 25.299999999999997"><polygon points="11.0,0 22,6.324999999999999 11.0,12.649999999999999 0,6.324999999999999" fill="#8ad9ff"/><polygon points="0,6.324999999999999 11.0,12.649999999999999 11.0,25.299999999999997 0,18.974999999999998" fill="#1e9be6"/><polygon points="11.0,12.649999999999999 22,6.324999999999999 22,18.974999999999998 11.0,25.299999999999997" fill="#26669e"/></svg>
<svg style="position:absolute;left:217px;top:610px;" width="24" height="4" viewBox="0 0 24 4"><rect x="0" y="0" width="1.5" height="1.5" fill="#888"/><rect x="0" y="2.5" width="1.5" height="1.5" fill="#888"/><rect x="3" y="0" width="1.5" height="1.5" fill="#888"/><rect x="3" y="2.5" width="1.5" height="1.5" fill="#888"/><rect x="6" y="0" width="1.5" height="1.5" fill="#888"/><rect x="6" y="2.5" width="1.5" height="1.5" fill="#888"/><rect x="9" y="0" width="1.5" height="1.5" fill="#888"/><rect x="9" y="2.5" width="1.5" height="1.5" fill="#888"/><rect x="12" y="0" width="1.5" height="1.5" fill="#888"/><rect x="12" y="2.5" width="1.5" height="1.5" fill="#888"/><rect x="15" y="0" width="1.5" height="1.5" fill="#888"/><rect x="15" y="2.5" width="1.5" height="1.5" fill="#888"/><rect x="18" y="0" width="1.5" height="1.5" fill="#888"/><rect x="18" y="2.5" width="1.5" height="1.5" fill="#888"/><rect x="21" y="0" width="1.5" height="1.5" fill="#888"/><rect x="21" y="2.5" width="1.5" height="1.5" fill="#888"/></svg>
<div style="position:absolute;left:11px;top:618px;width:437px;height:126px;background:#ffffff;border:1px solid #8e8e94;box-sizing:border-box;"></div>
<div style="position:absolute;left:5px;top:761px;width:168px;height:36px;background:#fbfbfb;border:1px solid #c3ccd3;border-bottom:none;border-radius:4px 4px 0 0;box-sizing:border-box;"></div>
<div style="position:absolute;left:5px;top:796px;width:451px;height:548px;background:#fbfbfb;border:1px solid #c3ccd3;border-top:none;box-sizing:border-box;"></div>
<div style="position:absolute;left:173px;top:796px;width:283px;height:1px;background:#c3ccd3;"></div>
<div class="t" style="left:14.40px;top:772px;font-size:16.64px;line-height:16.64px;color:#3a3a3a;font-weight:normal;font-style:normal;">Format Toolbox</div>
<svg style="position:absolute;left:142px;top:773px;" width="16" height="14" viewBox="0 0 16 14"><path d="M1 1 L15 13 M15 1 L1 13" stroke="#333" stroke-width="1.8"/></svg>
<div style="position:absolute;left:11px;top:802px;width:437px;height:535px;background:#fbfbfb;border:1px solid #8e8e94;box-sizing:border-box;"></div>
<div style="position:absolute;left:12px;top:803px;width:435px;height:30px;background:#d5d5d5;"></div>
<div class="t" style="left:29.00px;top:810px;font-size:16.36px;line-height:16.36px;color:#444444;font-weight:normal;font-style:normal;transform:scaleX(1.0164);">Alignment</div>
<div style="position:absolute;left:12px;top:835px;width:435px;height:30px;background:#d5d5d5;"></div>
<div class="t" style="left:27.72px;top:841px;font-size:16.36px;line-height:16.36px;color:#444444;font-weight:normal;font-style:normal;">Background</div>
<div style="position:absolute;left:12px;top:866px;width:435px;height:30px;background:#d5d5d5;"></div>
<div class="t" style="left:28.21px;top:873px;font-size:16.36px;line-height:16.36px;color:#444444;font-weight:normal;font-style:normal;transform:scaleX(1.0252);">Cell</div>
<div style="position:absolute;left:12px;top:897px;width:435px;height:30px;background:#d5d5d5;"></div>
<div class="t" style="left:27.68px;top:904px;font-size:16.36px;line-height:16.36px;color:#444444;font-weight:normal;font-style:normal;transform:scaleX(1.0313);">Font</div>
<div style="position:absolute;left:12px;top:929px;width:435px;height:30px;background:#d5d5d5;"></div>
<div class="t" style="left:28.24px;top:935px;font-size:16.36px;line-height:16.36px;color:#444444;font-weight:normal;font-style:normal;transform:scaleX(0.9848);">General</div>
<div style="position:absolute;left:12px;top:960px;width:435px;height:30px;background:#d5d5d5;"></div>
<div class="t" style="left:27.67px;top:967px;font-size:16.36px;line-height:16.36px;color:#444444;font-weight:normal;font-style:normal;transform:scaleX(1.0379);">Notes</div>
<div style="position:absolute;left:12px;top:992px;width:435px;height:29px;background:#d5d5d5;"></div>
<div class="t" style="left:27.73px;top:998px;font-size:16.36px;line-height:16.36px;color:#444444;font-weight:normal;font-style:normal;">Number Format</div>
<div style="position:absolute;left:12px;top:1023px;width:435px;height:30px;background:#d5d5d5;"></div>
<div class="t" style="left:27.62px;top:1030px;font-size:16.36px;line-height:16.36px;color:#444444;font-weight:normal;font-style:normal;transform:scaleX(1.0793);">Printing</div>
<div style="position:absolute;left:12px;top:1054px;width:435px;height:30px;background:#d5d5d5;"></div>
<div class="t" style="left:28.74px;top:1061px;font-size:16.36px;line-height:16.36px;color:#444444;font-weight:normal;font-style:normal;transform:scaleX(1.0284);">Table View</div>
<div style="position:absolute;left:12px;top:1086px;width:435px;height:29px;background:#d5d5d5;"></div>
<div class="t" style="left:29.00px;top:1092px;font-size:16.36px;line-height:16.36px;color:#444444;font-weight:normal;font-style:normal;transform:scaleX(0.9758);">Value</div>
<div style="position:absolute;left:463px;top:210px;width:1692px;height:1134px;background:#fafafa;border:1px solid #c3ccd3;box-sizing:border-box;"></div>
<div style="position:absolute;left:2155px;top:162px;width:3px;height:1186px;background:#dfdfdf;"></div>
<div style="position:absolute;left:2158px;top:162px;width:2px;height:1186px;background:#c3ccd3;"></div>
<div style="position:absolute;left:678px;top:171px;width:331px;height:39px;background:#ececec;border:1px solid #c3ccd3;border-bottom:none;border-radius:2px 2px 0 0;box-sizing:border-box;"></div>
<div class="t" style="left:724.04px;top:183px;font-size:17.78px;line-height:17.78px;color:#4a4a4a;font-weight:normal;font-style:normal;transform:scaleX(0.9092);">Operating and Financial Assumptions</div>
<svg style="position:absolute;left:688px;top:178px;" width="22" height="25.299999999999997" viewBox="0 0 22 25.299999999999997"><polygon points="11.0,0 22,6.324999999999999 11.0,12.649999999999999 0,6.324999999999999" fill="#8ad9ff"/><polygon points="0,6.324999999999999 11.0,12.649999999999999 11.0,25.299999999999997 0,18.974999999999998" fill="#1e9be6"/><polygon points="11.0,12.649999999999999 22,6.324999999999999 22,18.974999999999998 11.0,25.299999999999997" fill="#26669e"/></svg>
<div style="position:absolute;left:1010px;top:171px;width:195px;height:39px;background:#ececec;border:1px solid #c3ccd3;border-bottom:none;border-radius:2px 2px 0 0;box-sizing:border-box;"></div>
<div class="t" style="left:1058.23px;top:183px;font-size:17.78px;line-height:17.78px;color:#4a4a4a;font-weight:normal;font-style:normal;transform:scaleX(0.9155);">LBO Assumptions</div>
<svg style="position:absolute;left:1022px;top:178px;" width="22" height="25.299999999999997" viewBox="0 0 22 25.299999999999997"><polygon points="11.0,0 22,6.324999999999999 11.0,12.649999999999999 0,6.324999999999999" fill="#8ad9ff"/><polygon points="0,6.324999999999999 11.0,12.649999999999999 11.0,25.299999999999997 0,18.974999999999998" fill="#1e9be6"/><polygon points="11.0,12.649999999999999 22,6.324999999999999 22,18.974999999999998 11.0,25.299999999999997" fill="#26669e"/></svg>
<svg style="position:absolute;left:1037px;top:175px;" width="12" height="16" viewBox="0 0 12 16"><rect x="0" y="6.6" width="11" height="2.2" rx="1" fill="#333"/><rect x="3.2" y="0.4" width="5" height="14.6" fill="#6cdc62" stroke="#333" stroke-width="0.9"/></svg>
<div style="position:absolute;left:1208px;top:171px;width:170px;height:39px;background:#ececec;border:1px solid #c3ccd3;border-bottom:none;border-radius:2px 2px 0 0;box-sizing:border-box;"></div>
<div class="t" style="left:1254.52px;top:183px;font-size:17.78px;line-height:17.78px;color:#4a4a4a;font-weight:normal;font-style:normal;transform:scaleX(0.9212);">Debt Schedule</div>
<svg style="position:absolute;left:1219px;top:178px;" width="22" height="25.299999999999997" viewBox="0 0 22 25.299999999999997"><polygon points="11.0,0 22,6.324999999999999 11.0,12.649999999999999 0,6.324999999999999" fill="#8ad9ff"/><polygon points="0,6.324999999999999 11.0,12.649999999999999 11.0,25.299999999999997 0,18.974999999999998" fill="#1e9be6"/><polygon points="11.0,12.649999999999999 22,6.324999999999999 22,18.974999999999998 11.0,25.299999999999997" fill="#26669e"/></svg>
<svg style="position:absolute;left:1234px;top:175px;" width="12" height="16" viewBox="0 0 12 16"><rect x="0" y="6.6" width="11" height="2.2" rx="1" fill="#333"/><rect x="3.2" y="0.4" width="5" height="14.6" fill="#6cdc62" stroke="#333" stroke-width="0.9"/></svg>
<div style="position:absolute;left:1381px;top:171px;width:163px;height:39px;background:#ececec;border:1px solid #c3ccd3;border-bottom:none;border-radius:2px 2px 0 0;box-sizing:border-box;"></div>
<div class="t" style="left:1427.26px;top:183px;font-size:17.78px;line-height:17.78px;color:#4a4a4a;font-weight:normal;font-style:normal;transform:scaleX(0.8899);">Financial Data</div>
<svg style="position:absolute;left:1391px;top:178px;" width="22" height="25.299999999999997" viewBox="0 0 22 25.299999999999997"><polygon points="11.0,0 22,6.324999999999999 11.0,12.649999999999999 0,6.324999999999999" fill="#8ad9ff"/><polygon points="0,6.324999999999999 11.0,12.649999999999999 11.0,25.299999999999997 0,18.974999999999998" fill="#1e9be6"/><polygon points="11.0,12.649999999999999 22,6.324999999999999 22,18.974999999999998 11.0,25.299999999999997" fill="#26669e"/></svg>
<svg style="position:absolute;left:1409px;top:175px;" width="9" height="9" viewBox="0 0 9 9"><rect x="0.6" y="0.6" width="7.6" height="7.6" rx="2" fill="#f0e25a" stroke="#555" stroke-width="1.1"/></svg>
<div style="position:absolute;left:1547px;top:171px;width:117px;height:39px;background:#ececec;border:1px solid #c3ccd3;border-bottom:none;border-radius:2px 2px 0 0;box-sizing:border-box;"></div>
<div class="t" style="left:1593.31px;top:183px;font-size:17.78px;line-height:17.78px;color:#4a4a4a;font-weight:normal;font-style:normal;transform:scaleX(0.9260);">Results</div>
<svg style="position:absolute;left:1557px;top:178px;" width="22" height="25.299999999999997" viewBox="0 0 22 25.299999999999997"><polygon points="11.0,0 22,6.324999999999999 11.0,12.649999999999999 0,6.324999999999999" fill="#8ad9ff"/><polygon points="0,6.324999999999999 11.0,12.649999999999999 11.0,25.299999999999997 0,18.974999999999998" fill="#1e9be6"/><polygon points="11.0,12.649999999999999 22,6.324999999999999 22,18.974999999999998 11.0,25.299999999999997" fill="#26669e"/></svg>
<div style="position:absolute;left:1668px;top:171px;width:274px;height:39px;background:#ececec;border:1px solid #c3ccd3;border-bottom:none;border-radius:2px 2px 0 0;box-sizing:border-box;"></div>
<div class="t" style="left:1713.19px;top:183px;font-size:17.78px;line-height:17.78px;color:#4a4a4a;font-weight:normal;font-style:normal;transform:scaleX(0.9426);">LBO Control Premium Limits</div>
<svg style="position:absolute;left:1678px;top:178px;" width="22" height="25.299999999999997" viewBox="0 0 22 25.299999999999997"><polygon points="11.0,0 22,6.324999999999999 11.0,12.649999999999999 0,6.324999999999999" fill="#8ad9ff"/><polygon points="0,6.324999999999999 11.0,12.649999999999999 11.0,25.299999999999997 0,18.974999999999998" fill="#1e9be6"/><polygon points="11.0,12.649999999999999 22,6.324999999999999 22,18.974999999999998 11.0,25.299999999999997" fill="#26669e"/></svg>
<div style="position:absolute;left:463px;top:168px;width:215px;height:44px;background:#fafafa;border:1px solid #c3ccd3;border-bottom:none;border-radius:4px 4px 0 0;box-sizing:border-box;"></div>
<svg style="position:absolute;left:475px;top:175px;" width="28" height="26" viewBox="0 0 28 26"><rect x="2.8" y="7.5" width="20" height="16.5" fill="#fff" stroke="#8e8e8e" stroke-width="1.6"/><rect x="0.4" y="6.7" width="16" height="1.6" fill="#8a8a8a"/><rect x="5.2" y="10" width="7.2" height="2.6" rx="1.2" fill="#1f5f99"/><rect x="5.2" y="14.3" width="4.3" height="2.7" rx="1.2" fill="#1e98e6"/><rect x="5.2" y="19" width="8.8" height="2.5" rx="1.2" fill="#1e98e6"/><circle cx="17" cy="14.5" r="3.6" fill="#26669e"/><rect x="16" y="7" width="11.3" height="2.3" rx="1" fill="#333"/><rect x="18.8" y="0.3" width="5.2" height="15.1" fill="#6cdc62" stroke="#333" stroke-width="0.9"/></svg>
<div class="t" style="left:512.18px;top:183px;font-size:17.78px;line-height:17.78px;color:#2f6ea8;font-weight:normal;font-style:normal;transform:scaleX(0.9488);">LBO Worksheet</div>
<svg style="position:absolute;left:645px;top:184.5px;" width="15" height="13" viewBox="0 0 15 13"><path d="M1 1 L14 12.5 M14 1 L1 12.5" stroke="#3a3a3a" stroke-width="2"/></svg>
<div style="position:absolute;left:468px;top:216px;width:1682px;height:58px;background:#fdfdfd;"></div>
<div style="position:absolute;left:478px;top:230px;width:114px;height:29px;background:#78c984;"></div>
<div class="t" style="left:484.54px;top:237px;font-size:18.49px;line-height:18.49px;color:#ffffff;font-weight:bold;font-style:normal;transform:scaleX(1.0039);">Interact</div>
<div style="position:absolute;left:561px;top:234px;width:27px;height:21px;background:#e0e0e0;"></div>
<svg style="position:absolute;left:623px;top:236px;" width="12" height="18" viewBox="0 0 12 18"><path d="M0 0 L12 9 L7 10 L10 18 L8 18 L5 11 L1 14Z" fill="#c8c8c8"/></svg>
<div style="position:absolute;left:662px;top:233px;width:37px;height:23px;background:#c8c8c8;"></div>
<svg style="position:absolute;left:705px;top:242px;" width="8" height="5" viewBox="0 0 8 5"><polygon points="0,0 8,0 4.0,5" fill="#c8c8c8"/></svg>
<svg style="position:absolute;left:737px;top:230px;" width="28" height="29" viewBox="0 0 28 29"><line x1="3" y1="3" x2="25" y2="26" stroke="#c8c8c8" stroke-width="2"/><rect x="0" y="0" width="6" height="6" fill="#c8c8c8"/><rect x="22" y="23" width="6" height="6" fill="#c8c8c8"/></svg>
<svg style="position:absolute;left:775px;top:242px;" width="8" height="5" viewBox="0 0 8 5"><polygon points="0,0 8,0 4.0,5" fill="#c8c8c8"/></svg>
<svg style="position:absolute;left:804px;top:228px;" width="39" height="31" viewBox="0 0 39 31"><path d="M4 30 A17 17 0 1 1 35 30 Z" fill="none" stroke="#c8c8c8" stroke-width="2.4"/><line x1="15" y1="16" x2="20" y2="21" stroke="#c8c8c8" stroke-width="2"/><rect x="18" y="6" width="3" height="3" fill="#c8c8c8"/><rect x="6" y="19" width="3" height="3" fill="#c8c8c8"/><rect x="30" y="19" width="3" height="3" fill="#c8c8c8"/><rect x="10" y="10" width="2" height="2" fill="#c8c8c8"/><rect x="27" y="10" width="2" height="2" fill="#c8c8c8"/></svg>
<svg style="position:absolute;left:852px;top:242px;" width="8" height="5" viewBox="0 0 8 5"><polygon points="0,0 8,0 4.0,5" fill="#c8c8c8"/></svg>
<div class="t" style="left:883.50px;top:227px;font-size:38.4px;line-height:38.4px;color:#c8c8c8;font-weight:normal;font-style:normal;font-family:'Liberation Serif', serif;transform:scaleX(1.0145);">A</div>
<svg style="position:absolute;left:928px;top:231px;" width="38" height="28" viewBox="0 0 38 28"><rect width="38" height="28" fill="#c8c8c8"/><circle cx="7" cy="9" r="3" fill="#fdfdfd"/><path d="M6 26 L15 15 L18 15 L10 26Z" fill="#fdfdfd"/><path d="M13 26 L24 12 L34 26Z" fill="#fdfdfd"/></svg>
<svg style="position:absolute;left:987px;top:229px;" width="26" height="29.9" viewBox="0 0 26 29.9"><g fill="none" stroke="#c8c8c8" stroke-width="2.2" stroke-linejoin="round"><polygon points="13.0,1.2 24.8,7.475 24.8,22.424999999999997 13.0,28.7 1.2,22.424999999999997 1.2,7.475"/><polyline points="1.2,7.475 13.0,14.95 24.8,7.475"/><line x1="13.0" y1="14.95" x2="13.0" y2="28.7"/></g></svg>
<svg style="position:absolute;left:1037px;top:231px;" width="30" height="27" viewBox="0 0 30 27"><path d="M1.5 0 V25.5 H30" fill="none" stroke="#c8c8c8" stroke-width="3"/><rect x="6" y="12" width="4.5" height="11" fill="#c8c8c8"/><rect x="14" y="6" width="4.5" height="17" fill="#c8c8c8"/><rect x="22" y="16" width="4.5" height="7" fill="#c8c8c8"/></svg>
<svg style="position:absolute;left:1075px;top:242px;" width="8" height="5" viewBox="0 0 8 5"><polygon points="0,0 8,0 4.0,5" fill="#c8c8c8"/></svg>
<svg style="position:absolute;left:1105px;top:228px;" width="34" height="33" viewBox="0 0 34 33"><rect x="0" y="0" width="26" height="25" fill="#c8c8c8"/><rect x="17" y="17" width="17" height="16" fill="#c8c8c8"/></svg>
<svg style="position:absolute;left:1156px;top:230px;" width="31" height="30" viewBox="0 0 31 30"><rect x="0" y="0" width="13" height="13" fill="#c8c8c8"/><rect x="5" y="6" width="20" height="18" fill="#c8c8c8"/><rect x="17" y="17" width="14" height="13" fill="#c8c8c8"/></svg>
<svg style="position:absolute;left:1207px;top:230px;" width="31" height="30" viewBox="0 0 31 30"><rect x="0" y="0" width="13" height="13" fill="#c8c8c8"/><rect x="5" y="6" width="20" height="18" fill="#c8c8c8"/><rect x="17" y="17" width="14" height="13" fill="#c8c8c8"/></svg>
<div style="position:absolute;left:1253px;top:228px;width:2px;height:33px;background:#5a5a5a;"></div>
<svg style="position:absolute;left:1270px;top:229px;" width="31" height="31" viewBox="0 0 31 31"><g fill="#c8c8c8"><rect x="0" y="0" width="6" height="6"/><rect x="25" y="0" width="6" height="6"/><rect x="0" y="25" width="6" height="6"/><rect x="25" y="25" width="6" height="6"/></g><rect x="3" y="3" width="17" height="17" fill="none" stroke="#c8c8c8" stroke-width="2.5"/><rect x="11" y="11" width="17" height="17" fill="none" stroke="#c8c8c8" stroke-width="2.5"/></svg>
<svg style="position:absolute;left:1321px;top:229px;" width="31" height="31" viewBox="0 0 31 31"><g fill="#c8c8c8"><rect x="0" y="0" width="6" height="6"/><rect x="14" y="0" width="6" height="6"/><rect x="0" y="14" width="6" height="6"/><rect x="9" y="10" width="6" height="6"/><rect x="25" y="10" width="6" height="6"/><rect x="9" y="25" width="6" height="6"/><rect x="25" y="25" width="6" height="6"/></g><rect x="3" y="3" width="14" height="14" fill="none" stroke="#c8c8c8" stroke-width="2.5"/><rect x="12" y="13" width="16" height="15" fill="none" stroke="#c8c8c8" stroke-width="2.5"/></svg>
<div style="position:absolute;left:1363px;top:229px;width:75px;height:31px;background:#fafafa;border:1.5px solid #a9a9b8;box-sizing:border-box;"></div>
<div class="t" style="left:1400.01px;top:237px;font-size:16.36px;line-height:16.36px;color:#555;font-weight:normal;font-style:normal;transform:scaleX(1.1491);">0</div>
<svg style="position:absolute;left:1420px;top:236px;" width="8" height="18" viewBox="0 0 8 18"><path d="M1 4 L4 1 L7 4" fill="none" stroke="#444" stroke-width="1.3"/><path d="M1 14 L4 17 L7 14" fill="none" stroke="#444" stroke-width="1.3"/></svg>
<div style="position:absolute;left:1443px;top:228px;width:2px;height:33px;background:#5a5a5a;"></div>
<svg style="position:absolute;left:1461px;top:229px;" width="31" height="31" viewBox="0 0 31 31"><line x1="1.0" y1="0" x2="1.0" y2="31" stroke="#c8c8c8" stroke-width="2"/><line x1="0" y1="1.0" x2="31" y2="1.0" stroke="#c8c8c8" stroke-width="2"/><line x1="8.2" y1="0" x2="8.2" y2="31" stroke="#c8c8c8" stroke-width="2"/><line x1="0" y1="8.2" x2="31" y2="8.2" stroke="#c8c8c8" stroke-width="2"/><line x1="15.5" y1="0" x2="15.5" y2="31" stroke="#c8c8c8" stroke-width="2"/><line x1="0" y1="15.5" x2="31" y2="15.5" stroke="#c8c8c8" stroke-width="2"/><line x1="22.8" y1="0" x2="22.8" y2="31" stroke="#c8c8c8" stroke-width="2"/><line x1="0" y1="22.8" x2="31" y2="22.8" stroke="#c8c8c8" stroke-width="2"/><line x1="30.0" y1="0" x2="30.0" y2="31" stroke="#c8c8c8" stroke-width="2"/><line x1="0" y1="30.0" x2="31" y2="30.0" stroke="#c8c8c8" stroke-width="2"/></svg>
<svg style="position:absolute;left:1512px;top:229px;" width="31" height="31" viewBox="0 0 31 31"><line x1="15.5" y1="0" x2="15.5" y2="31" stroke="#c8c8c8" stroke-width="2"/><line x1="0" y1="15.5" x2="31" y2="15.5" stroke="#c8c8c8" stroke-width="2"/><circle cx="15.5" cy="15.5" r="3.5" fill="#c8c8c8"/></svg>
<svg style="position:absolute;left:1553px;top:242px;" width="8" height="5" viewBox="0 0 8 5"><polygon points="0,0 8,0 4.0,5" fill="#c8c8c8"/></svg>
<svg style="position:absolute;left:1587px;top:229px;" width="22" height="31" viewBox="0 0 22 31"><rect x="10" y="0" width="2" height="31" fill="#c8c8c8"/><rect x="5" y="3" width="12" height="11" fill="#c8c8c8"/><rect x="0" y="17" width="22" height="11" fill="#c8c8c8"/></svg>
<svg style="position:absolute;left:1624px;top:242px;" width="8" height="5" viewBox="0 0 8 5"><polygon points="0,0 8,0 4.0,5" fill="#c8c8c8"/></svg>
<svg style="position:absolute;left:1653px;top:229px;" width="30" height="31" viewBox="0 0 30 31"><rect x="0" y="5" width="10" height="22" fill="#c8c8c8"/><rect x="12.5" y="0" width="1.6" height="31" fill="#c8c8c8"/><rect x="16" y="0" width="1.6" height="31" fill="#c8c8c8"/><rect x="20" y="9" width="10" height="13" fill="#c8c8c8"/></svg>
<svg style="position:absolute;left:1693px;top:242px;" width="8" height="5" viewBox="0 0 8 5"><polygon points="0,0 8,0 4.0,5" fill="#c8c8c8"/></svg>
<div style="position:absolute;left:469px;top:286px;width:1679px;height:1051px;background:#ffffff;border:1px solid #8e8e8e;box-sizing:border-box;"></div>
<div style="position:absolute;left:2121px;top:289px;width:2px;height:1047px;background:#8e8e8e;"></div>
<div style="position:absolute;left:2123px;top:287px;width:24px;height:1049px;background:#fcfcfc;"></div>
<div style="position:absolute;left:2123px;top:511px;width:24px;height:548px;background:#dcdcdc;border-top:1px solid #bdbdbd;border-bottom:1px solid #c8c8c8;box-sizing:border-box;"></div>
<svg style="position:absolute;left:2128.5px;top:297px;" width="11" height="7" viewBox="0 0 11 7"><polygon points="5.5,0 11,6.5 0,6.5" fill="#333"/></svg>
<svg style="position:absolute;left:2128.5px;top:1320px;" width="11" height="7" viewBox="0 0 11 7"><polygon points="0,0 11,0 5.5,6.5" fill="#333"/></svg>
<div style="position:absolute;left:795px;top:288px;width:218px;height:10px;background:#eaec8f;"></div>
<div style="position:absolute;left:1157px;top:287px;width:2px;height:4px;background:#222;"></div>
<svg style="position:absolute;left:1231px;top:287px;" width="3" height="4" viewBox="0 0 3 4"><path d="M2.5 0 L0.5 4" stroke="#555" stroke-width="1.2"/></svg>
<div class="t" style="left:507.23px;top:309px;font-size:17.35px;line-height:17.35px;color:#4e4e4e;font-weight:normal;font-style:normal;transform:scaleX(0.9502);">Current Net Debt</div>
<div class="t" style="left:972.94px;top:309px;font-size:17.07px;line-height:17.07px;color:#111111;font-weight:normal;font-style:normal;">500</div>
<div class="t" style="left:506.74px;top:345px;font-size:17.35px;line-height:17.35px;color:#4e4e4e;font-weight:normal;font-style:normal;transform:scaleX(0.9310);">Enterprise Value</div>
<div class="t" style="left:949.21px;top:345px;font-size:17.07px;line-height:17.07px;color:#111111;font-weight:normal;font-style:normal;">15,500</div>
<div style="position:absolute;left:795px;top:372px;width:218px;height:34.5px;background:#eaec8f;"></div>
<div class="t" style="left:506.76px;top:381px;font-size:17.35px;line-height:17.35px;color:#4e4e4e;font-weight:normal;font-style:normal;transform:scaleX(0.9183);">LTM Revenue</div>
<div class="t" style="left:958.71px;top:381px;font-size:17.07px;line-height:17.07px;color:#2828e4;font-weight:normal;font-style:normal;">6,000</div>
<div style="position:absolute;left:795px;top:408px;width:218px;height:34.5px;background:#eaec8f;"></div>
<div class="t" style="left:506.83px;top:416px;font-size:17.35px;line-height:17.35px;color:#4e4e4e;font-weight:normal;font-style:normal;transform:scaleX(0.8662);">LTM EBITDA</div>
<div class="t" style="left:958.71px;top:416px;font-size:17.07px;line-height:17.07px;color:#2828e4;font-weight:normal;font-style:normal;">2,400</div>
<div style="position:absolute;left:795px;top:444px;width:218px;height:34.5px;background:#eaec8f;"></div>
<div class="t" style="left:506.70px;top:452px;font-size:17.35px;line-height:17.35px;color:#4e4e4e;font-weight:normal;font-style:normal;transform:scaleX(0.9589);">Free cash flows after debt paydown</div>
<div class="t" style="left:972.94px;top:452px;font-size:17.07px;line-height:17.07px;color:#2828e4;font-weight:normal;font-style:normal;">480</div>
<div class="t" style="left:506.80px;top:488px;font-size:17.35px;line-height:17.35px;color:#4e4e4e;font-weight:normal;font-style:normal;transform:scaleX(0.8875);">EV / EBITDA multiple</div>
<div class="t" style="left:974.34px;top:488px;font-size:17.07px;line-height:17.07px;color:#111111;font-weight:normal;font-style:normal;">6.5x</div>
<div class="t" style="left:1063.36px;top:317px;font-size:18.2px;line-height:18.2px;color:#4e4e4e;font-weight:normal;font-style:normal;transform:scaleX(0.8753);">Financial Sponsor Required Equity Return</div>
<div class="t" style="left:1063.81px;top:337px;font-size:18.2px;line-height:18.2px;color:#4e4e4e;font-weight:normal;font-style:normal;transform:scaleX(0.9215);">(IRR)</div>
<div style="position:absolute;left:1373px;top:288px;width:190px;height:21px;background:#eaec8f;"></div>
<div style="position:absolute;left:1373px;top:311px;width:190px;height:52px;background:#eaec8f;"></div>
<svg style="position:absolute;left:1569px;top:288px;" width="15" height="14" viewBox="0 0 15 14"><polygon points="0,0 14,0 0,13" fill="#eaec8f"/></svg>
<svg style="position:absolute;left:1569px;top:320px;" width="19" height="38" viewBox="0 0 19 38"><polygon points="0,0 19,19 0,38" fill="#eaec8f"/></svg>
<div class="t" style="left:1441.17px;top:328px;font-size:17.07px;line-height:17.07px;color:#2828e4;font-weight:normal;font-style:normal;transform:scaleX(1.0405);">25.0%</div>
<div style="position:absolute;left:1605px;top:335px;width:465px;height:4.5px;background:#e4e4e4;border:1px solid #d2d2d2;box-sizing:border-box;border-radius:1px;"></div>
<div style="position:absolute;left:1717.5px;top:321px;width:7.5px;height:31.5px;background:#0a78dc;"></div>
<div style="position:absolute;left:1903px;top:288px;width:8px;height:10px;background:#0a78dc;"></div>
<div style="position:absolute;left:1059px;top:386px;width:1022px;height:67px;background:#7b83d8;"></div>
<div class="t" style="left:1063.63px;top:405px;font-size:22.76px;line-height:22.76px;color:#ffffff;font-weight:bold;font-style:normal;transform:scaleX(0.9411);">Control Premium Limit</div>
<div style="position:absolute;left:1059px;top:468px;width:320px;height:54px;background:#dadada;"></div>
<div style="position:absolute;left:1388px;top:468px;width:319px;height:54px;background:#dadada;"></div>
<div class="t" style="left:1078.79px;top:484px;font-size:24.89px;line-height:24.89px;color:#6f78e0;font-weight:normal;font-style:normal;transform:scaleX(0.8799);">High</div>
<div class="t" style="left:1407.75px;top:484px;font-size:24.89px;line-height:24.89px;color:#6f78e0;font-weight:normal;font-style:normal;transform:scaleX(0.8474);">Low</div>
<div style="position:absolute;left:1188px;top:478.5px;width:176px;height:33.0px;background:#ffffff;border:1.5px solid #858585;box-sizing:border-box;"></div>
<div style="position:absolute;left:1517px;top:478.5px;width:175px;height:33.0px;background:#ffffff;border:1.5px solid #858585;border-top:2px solid #5a5f88;border-left:2px solid #5a5f88;box-sizing:border-box;"></div>
<div class="t" style="left:1302.68px;top:484px;font-size:24.18px;line-height:24.18px;color:#2c2cd4;font-weight:normal;font-style:normal;transform:scaleX(0.8449);">40.0%</div>
<div class="t" style="left:1631.04px;top:484px;font-size:24.18px;line-height:24.18px;color:#2c2cd4;font-weight:normal;font-style:normal;transform:scaleX(0.8500);">20.0%</div>
<div style="position:absolute;left:502px;top:563px;width:1579px;height:68px;background:#7b83d8;"></div>
<div class="t" style="left:506.02px;top:582px;font-size:22.04px;line-height:22.04px;color:#ffffff;font-weight:bold;font-style:normal;transform:scaleX(0.9317);">LBO Analysis</div>
<div class="t" style="left:506.86px;top:664px;font-size:19.48px;line-height:19.48px;color:#4e4e4e;font-weight:normal;font-style:normal;transform:scaleX(0.9472);">Implied Enterprise Value in Exit Year</div>
<div style="position:absolute;left:1548px;top:653px;width:504px;height:40px;background:#dadada;"></div>
<div class="t" style="left:1960.85px;top:663px;font-size:20.62px;line-height:20.62px;color:#4a4a4a;font-weight:normal;font-style:normal;">22,840.0</div>
<div class="t" style="left:506.85px;top:706px;font-size:19.48px;line-height:19.48px;color:#4e4e4e;font-weight:normal;font-style:normal;transform:scaleX(0.9512);">Implied Equity Value in Exit Year</div>
<div style="position:absolute;left:1548px;top:695px;width:504px;height:40px;background:#dadada;"></div>
<div class="t" style="left:1960.85px;top:705px;font-size:20.62px;line-height:20.62px;color:#4a4a4a;font-weight:normal;font-style:normal;">14,940.4</div>
<div class="t" style="left:506.89px;top:748px;font-size:19.48px;line-height:19.48px;color:#4e4e4e;font-weight:normal;font-style:normal;transform:scaleX(0.9244);">Maximum amount financial sponsons can invest</div>
<div style="position:absolute;left:1548px;top:737px;width:504px;height:40px;background:#dadada;"></div>
<div class="t" style="left:1974.17px;top:747px;font-size:20.62px;line-height:20.62px;color:#4a4a4a;font-weight:normal;font-style:normal;">6,119.6</div>
<div class="t" style="left:506.83px;top:790px;font-size:19.48px;line-height:19.48px;color:#4e4e4e;font-weight:normal;font-style:normal;transform:scaleX(0.9657);">How much do sponsors have to pay to aquire this company and pay off it's debt?</div>
<div style="position:absolute;left:1548px;top:779px;width:504px;height:40px;background:#dadada;"></div>
<div class="t" style="left:1961.17px;top:789px;font-size:20.62px;line-height:20.62px;color:#4a4a4a;font-weight:normal;font-style:normal;">20,519.6</div>
<div class="t" style="left:508.30px;top:832px;font-size:19.48px;line-height:19.48px;color:#4e4e4e;font-weight:normal;font-style:normal;transform:scaleX(0.9482);">What is the highest purchase price the sponsors should pay for shares today?</div>
<div style="position:absolute;left:1548px;top:821px;width:504px;height:40px;background:#dadada;"></div>
<div class="t" style="left:1989.51px;top:831px;font-size:20.62px;line-height:20.62px;color:#4a4a4a;font-weight:normal;font-style:normal;">40.04</div>
<div class="t" style="left:507.45px;top:874px;font-size:19.48px;line-height:19.48px;color:#4e4e4e;font-weight:normal;font-style:normal;transform:scaleX(0.9305);">Control Premium</div>
<div style="position:absolute;left:1548px;top:863px;width:504px;height:40px;background:#dadada;"></div>
<div class="t" style="left:1976.38px;top:873px;font-size:20.62px;line-height:20.62px;color:#4a4a4a;font-weight:normal;font-style:normal;">33.46%</div>
<div class="t" style="left:1557.71px;top:831px;font-size:20.62px;line-height:20.62px;color:#444444;font-weight:normal;font-style:normal;transform:scaleX(0.9129);">£</div>
<div class="t" style="left:507.19px;top:916px;font-size:19.48px;line-height:19.48px;color:#222222;font-weight:bold;font-style:normal;transform:scaleX(0.9139);">LBO Likely?</div>
<div style="position:absolute;left:1548px;top:905px;width:504px;height:40px;background:#6ee05a;"></div>
<div class="t" style="left:1908.88px;top:915px;font-size:20.62px;line-height:20.62px;color:#333333;font-weight:bold;font-style:normal;transform:scaleX(0.8661);">LBO is Possible</div>
<div class="t" style="left:1586.79px;top:959px;font-size:15.64px;line-height:15.64px;color:#777777;font-weight:normal;font-style:normal;transform:scaleX(0.9873);">LBO Indicator is configured using the control premium limits (above).</div>
<div style="position:absolute;left:502px;top:1003px;width:1579px;height:68px;background:#7b83d8;"></div>
<div class="t" style="left:505.89px;top:1022px;font-size:22.47px;line-height:22.47px;color:#ffffff;font-weight:bold;font-style:normal;transform:scaleX(0.9353);">Financial Data</div>
<div class="t" style="left:953.05px;top:1101px;font-size:17.07px;line-height:17.07px;color:#222222;font-weight:normal;font-style:normal;transform:scaleX(0.9514);">Year 0</div>
<div class="t" style="left:957.41px;top:1137px;font-size:17.07px;line-height:17.07px;color:#333333;font-weight:bold;font-style:normal;transform:scaleX(1.1076);">2012</div>
<div class="t" style="left:1103.04px;top:1101px;font-size:17.07px;line-height:17.07px;color:#222222;font-weight:normal;font-style:normal;transform:scaleX(0.9567);">Year 1</div>
<div class="t" style="left:1107.41px;top:1137px;font-size:17.07px;line-height:17.07px;color:#333333;font-weight:bold;font-style:normal;transform:scaleX(1.1076);">2013</div>
<div class="t" style="left:1253.04px;top:1101px;font-size:17.07px;line-height:17.07px;color:#222222;font-weight:normal;font-style:normal;transform:scaleX(0.9567);">Year 2</div>
<div class="t" style="left:1257.42px;top:1137px;font-size:17.07px;line-height:17.07px;color:#333333;font-weight:bold;font-style:normal;transform:scaleX(1.0919);">2014</div>
<div class="t" style="left:1403.04px;top:1101px;font-size:17.07px;line-height:17.07px;color:#222222;font-weight:normal;font-style:normal;transform:scaleX(0.9567);">Year 3</div>
<div class="t" style="left:1407.41px;top:1137px;font-size:17.07px;line-height:17.07px;color:#333333;font-weight:bold;font-style:normal;transform:scaleX(1.1076);">2015</div>
<div class="t" style="left:1553.05px;top:1101px;font-size:17.07px;line-height:17.07px;color:#222222;font-weight:normal;font-style:normal;transform:scaleX(0.9514);">Year 4</div>
<div class="t" style="left:1557.41px;top:1137px;font-size:17.07px;line-height:17.07px;color:#333333;font-weight:bold;font-style:normal;transform:scaleX(1.1076);">2016</div>
<div class="t" style="left:1703.04px;top:1101px;font-size:17.07px;line-height:17.07px;color:#222222;font-weight:normal;font-style:normal;transform:scaleX(0.9567);">Year 5</div>
<div class="t" style="left:1707.40px;top:1137px;font-size:17.07px;line-height:17.07px;color:#333333;font-weight:bold;font-style:normal;transform:scaleX(1.1157);">2017</div>
<div class="t" style="left:1853.04px;top:1101px;font-size:17.07px;line-height:17.07px;color:#222222;font-weight:normal;font-style:normal;transform:scaleX(0.9567);">Year 6</div>
<div class="t" style="left:1857.41px;top:1137px;font-size:17.07px;line-height:17.07px;color:#333333;font-weight:bold;font-style:normal;transform:scaleX(1.1076);">2018</div>
<div class="t" style="left:2003.04px;top:1101px;font-size:17.07px;line-height:17.07px;color:#222222;font-weight:normal;font-style:normal;transform:scaleX(0.9567);">Year 7</div>
<div class="t" style="left:2007.41px;top:1137px;font-size:17.07px;line-height:17.07px;color:#333333;font-weight:bold;font-style:normal;transform:scaleX(1.1076);">2019</div>
<div class="t" style="left:510.51px;top:1137px;font-size:17.07px;line-height:17.07px;color:#333333;font-weight:bold;font-style:normal;transform:scaleX(1.0741);">Year</div>
<div style="position:absolute;left:507px;top:1162px;width:1549px;height:1px;background:#8a8a8a;"></div>
<div style="position:absolute;left:507px;top:1171px;width:1549px;height:1px;background:#8a8a8a;"></div>
<div class="t" style="left:509.59px;top:1179px;font-size:17.07px;line-height:17.07px;color:#222222;font-weight:normal;font-style:normal;transform:scaleX(0.9079);">Revenue</div>
<div class="t" style="left:948.31px;top:1180px;font-size:16.71px;line-height:16.71px;color:#222222;font-weight:normal;font-style:normal;">6000.0</div>
<div class="t" style="left:1098.31px;top:1180px;font-size:16.71px;line-height:16.71px;color:#222222;font-weight:normal;font-style:normal;">6600.0</div>
<div class="t" style="left:1248.31px;top:1180px;font-size:16.71px;line-height:16.71px;color:#222222;font-weight:normal;font-style:normal;">7260.0</div>
<div class="t" style="left:1398.31px;top:1180px;font-size:16.71px;line-height:16.71px;color:#222222;font-weight:normal;font-style:normal;">7986.0</div>
<div class="t" style="left:1548.57px;top:1180px;font-size:16.71px;line-height:16.71px;color:#222222;font-weight:normal;font-style:normal;">8784.6</div>
<div class="t" style="left:1698.57px;top:1180px;font-size:16.71px;line-height:16.71px;color:#222222;font-weight:normal;font-style:normal;">9663.1</div>
<div class="t" style="left:1839.01px;top:1180px;font-size:16.71px;line-height:16.71px;color:#222222;font-weight:normal;font-style:normal;">10629.4</div>
<div class="t" style="left:1990.52px;top:1180px;font-size:16.71px;line-height:16.71px;color:#222222;font-weight:normal;font-style:normal;">11692.3</div>
<div style="position:absolute;left:1007px;top:1205px;width:148px;height:31px;background:#eaec8f;"></div>
<div style="position:absolute;left:1157px;top:1205px;width:148px;height:31px;background:#eaec8f;"></div>
<div style="position:absolute;left:1307px;top:1205px;width:148px;height:31px;background:#eaec8f;"></div>
<div style="position:absolute;left:1457px;top:1205px;width:148px;height:31px;background:#eaec8f;"></div>
<div style="position:absolute;left:1607px;top:1205px;width:148px;height:31px;background:#eaec8f;"></div>
<div style="position:absolute;left:1757px;top:1205px;width:148px;height:31px;background:#eaec8f;"></div>
<div style="position:absolute;left:1907px;top:1205px;width:148px;height:31px;background:#eaec8f;"></div>
<div class="t" style="left:510.54px;top:1212px;font-size:17.07px;line-height:17.07px;color:#222222;font-weight:normal;font-style:italic;transform:scaleX(0.9757);">Revenue Growth Rate (%)</div>
<div class="t" style="left:1102.12px;top:1213px;font-size:16.71px;line-height:16.71px;color:#2828e4;font-weight:normal;font-style:normal;">10.0%</div>
<div class="t" style="left:1252.12px;top:1213px;font-size:16.71px;line-height:16.71px;color:#2828e4;font-weight:normal;font-style:normal;">10.0%</div>
<div class="t" style="left:1402.12px;top:1213px;font-size:16.71px;line-height:16.71px;color:#2828e4;font-weight:normal;font-style:normal;">10.0%</div>
<div class="t" style="left:1552.12px;top:1213px;font-size:16.71px;line-height:16.71px;color:#2828e4;font-weight:normal;font-style:normal;">10.0%</div>
<div class="t" style="left:1702.12px;top:1213px;font-size:16.71px;line-height:16.71px;color:#2828e4;font-weight:normal;font-style:normal;">10.0%</div>
<div class="t" style="left:1852.12px;top:1213px;font-size:16.71px;line-height:16.71px;color:#2828e4;font-weight:normal;font-style:normal;">10.0%</div>
<div class="t" style="left:2002.12px;top:1213px;font-size:16.71px;line-height:16.71px;color:#2828e4;font-weight:normal;font-style:normal;">10.0%</div>
<div class="t" style="left:509.65px;top:1248px;font-size:17.07px;line-height:17.07px;color:#222222;font-weight:normal;font-style:normal;transform:scaleX(0.8642);">EBITDA</div>
<div class="t" style="left:948.31px;top:1249px;font-size:16.71px;line-height:16.71px;color:#222222;font-weight:normal;font-style:normal;">2400.0</div>
<div class="t" style="left:1098.31px;top:1249px;font-size:16.71px;line-height:16.71px;color:#222222;font-weight:normal;font-style:normal;">2640.0</div>
<div class="t" style="left:1248.31px;top:1249px;font-size:16.71px;line-height:16.71px;color:#222222;font-weight:normal;font-style:normal;">2904.0</div>
<div class="t" style="left:1398.31px;top:1249px;font-size:16.71px;line-height:16.71px;color:#222222;font-weight:normal;font-style:normal;">3194.4</div>
<div class="t" style="left:1548.57px;top:1249px;font-size:16.71px;line-height:16.71px;color:#222222;font-weight:normal;font-style:normal;">3513.8</div>
<div class="t" style="left:1698.57px;top:1249px;font-size:16.71px;line-height:16.71px;color:#222222;font-weight:normal;font-style:normal;">3865.2</div>
<div class="t" style="left:1848.57px;top:1249px;font-size:16.71px;line-height:16.71px;color:#222222;font-weight:normal;font-style:normal;">4251.7</div>
<div class="t" style="left:1998.57px;top:1249px;font-size:16.71px;line-height:16.71px;color:#222222;font-weight:normal;font-style:normal;">4676.9</div>
<div style="position:absolute;left:1007px;top:1274px;width:148px;height:32px;background:#eaec8f;"></div>
<div style="position:absolute;left:1157px;top:1274px;width:148px;height:32px;background:#eaec8f;"></div>
<div style="position:absolute;left:1307px;top:1274px;width:148px;height:32px;background:#eaec8f;"></div>
<div style="position:absolute;left:1457px;top:1274px;width:148px;height:32px;background:#eaec8f;"></div>
<div style="position:absolute;left:1607px;top:1274px;width:148px;height:32px;background:#eaec8f;"></div>
<div style="position:absolute;left:1757px;top:1274px;width:148px;height:32px;background:#eaec8f;"></div>
<div style="position:absolute;left:1907px;top:1274px;width:148px;height:32px;background:#eaec8f;"></div>
<div class="t" style="left:510.55px;top:1281px;font-size:17.07px;line-height:17.07px;color:#222222;font-weight:normal;font-style:italic;transform:scaleX(0.9461);">EBITDA Margin (%)</div>
<div class="t" style="left:952.12px;top:1282px;font-size:16.71px;line-height:16.71px;color:#222222;font-weight:normal;font-style:normal;">40.0%</div>
<div class="t" style="left:1102.12px;top:1282px;font-size:16.71px;line-height:16.71px;color:#2828e4;font-weight:normal;font-style:normal;">40.0%</div>
<div class="t" style="left:1252.12px;top:1282px;font-size:16.71px;line-height:16.71px;color:#2828e4;font-weight:normal;font-style:normal;">40.0%</div>
<div class="t" style="left:1402.12px;top:1282px;font-size:16.71px;line-height:16.71px;color:#2828e4;font-weight:normal;font-style:normal;">40.0%</div>
<div class="t" style="left:1552.12px;top:1282px;font-size:16.71px;line-height:16.71px;color:#2828e4;font-weight:normal;font-style:normal;">40.0%</div>
<div class="t" style="left:1702.12px;top:1282px;font-size:16.71px;line-height:16.71px;color:#2828e4;font-weight:normal;font-style:normal;">40.0%</div>
<div class="t" style="left:1852.12px;top:1282px;font-size:16.71px;line-height:16.71px;color:#2828e4;font-weight:normal;font-style:normal;">40.0%</div>
<div class="t" style="left:2002.12px;top:1282px;font-size:16.71px;line-height:16.71px;color:#2828e4;font-weight:normal;font-style:normal;">40.0%</div>
<div class="t" style="left:509.50px;top:1317px;font-size:17.07px;line-height:17.07px;color:#222222;font-weight:normal;font-style:normal;transform:scaleX(0.9730);">Free cash flow after required debt paydown</div>
<div class="t" style="left:957.60px;top:1318px;font-size:16.71px;line-height:16.71px;color:#222222;font-weight:normal;font-style:normal;">480.0</div>
<div class="t" style="left:1107.60px;top:1318px;font-size:16.71px;line-height:16.71px;color:#222222;font-weight:normal;font-style:normal;">528.0</div>
<div class="t" style="left:1257.86px;top:1318px;font-size:16.71px;line-height:16.71px;color:#222222;font-weight:normal;font-style:normal;">580.8</div>
<div class="t" style="left:1407.86px;top:1318px;font-size:16.71px;line-height:16.71px;color:#222222;font-weight:normal;font-style:normal;">638.9</div>
<div class="t" style="left:1557.86px;top:1318px;font-size:16.71px;line-height:16.71px;color:#222222;font-weight:normal;font-style:normal;">702.8</div>
<div class="t" style="left:1707.60px;top:1318px;font-size:16.71px;line-height:16.71px;color:#222222;font-weight:normal;font-style:normal;">773.0</div>
<div class="t" style="left:1857.86px;top:1318px;font-size:16.71px;line-height:16.71px;color:#222222;font-weight:normal;font-style:normal;">850.3</div>
<div class="t" style="left:2007.60px;top:1318px;font-size:16.71px;line-height:16.71px;color:#222222;font-weight:normal;font-style:normal;">935.4</div>
<div style="position:absolute;left:507px;top:1237px;width:1549px;height:1px;background:#8a8a8a;"></div>
<div style="position:absolute;left:507px;top:1240px;width:1549px;height:1px;background:#8a8a8a;"></div>
<div style="position:absolute;left:507px;top:1307px;width:1549px;height:1px;background:#8a8a8a;"></div>
<div style="position:absolute;left:507px;top:1310px;width:1549px;height:1px;background:#8a8a8a;"></div>
<div style="position:absolute;left:0px;top:1349px;width:2160px;height:1px;background:#8a8a8a;"></div>
<div style="position:absolute;left:0px;top:1350px;width:2160px;height:27px;background:#5a63a0;"></div>
<div class="t" style="left:7.16px;top:1355px;font-size:18.49px;line-height:18.49px;color:#ffffff;font-weight:normal;font-style:normal;transform:scaleX(0.9270);">Modeler</div>
<div class="t" style="left:1331.64px;top:1356px;font-size:18.49px;line-height:18.49px;color:#ffffff;font-weight:normal;font-style:normal;transform:scaleX(0.9386);">Low:Limit</div>
<svg style="position:absolute;left:2127px;top:1353px;" width="22" height="22" viewBox="0 0 22 22"><line x1="15.5" y1="11.0" x2="22.0" y2="11.0" stroke="#72ad9c" stroke-width="1.7"/><line x1="15.2" y1="12.7" x2="21.2" y2="15.2" stroke="#72ad9c" stroke-width="1.7"/><line x1="14.2" y1="14.2" x2="18.8" y2="18.8" stroke="#72ad9c" stroke-width="1.7"/><line x1="12.7" y1="15.2" x2="15.2" y2="21.2" stroke="#72ad9c" stroke-width="1.7"/><line x1="11.0" y1="15.5" x2="11.0" y2="22.0" stroke="#72ad9c" stroke-width="1.7"/><line x1="9.3" y1="15.2" x2="6.8" y2="21.2" stroke="#72ad9c" stroke-width="1.7"/><line x1="7.8" y1="14.2" x2="3.2" y2="18.8" stroke="#72ad9c" stroke-width="1.7"/><line x1="6.8" y1="12.7" x2="0.8" y2="15.2" stroke="#72ad9c" stroke-width="1.7"/><line x1="6.5" y1="11.0" x2="0.0" y2="11.0" stroke="#72ad9c" stroke-width="1.7"/><line x1="6.8" y1="9.3" x2="0.8" y2="6.8" stroke="#72ad9c" stroke-width="1.7"/><line x1="7.8" y1="7.8" x2="3.2" y2="3.2" stroke="#72ad9c" stroke-width="1.7"/><line x1="9.3" y1="6.8" x2="6.8" y2="0.8" stroke="#72ad9c" stroke-width="1.7"/><line x1="11.0" y1="6.5" x2="11.0" y2="0.0" stroke="#72ad9c" stroke-width="1.7"/><line x1="12.7" y1="6.8" x2="15.2" y2="0.8" stroke="#72ad9c" stroke-width="1.7"/><line x1="14.2" y1="7.8" x2="18.8" y2="3.2" stroke="#72ad9c" stroke-width="1.7"/><line x1="15.2" y1="9.3" x2="21.2" y2="6.8" stroke="#72ad9c" stroke-width="1.7"/></svg>
</body></html>
